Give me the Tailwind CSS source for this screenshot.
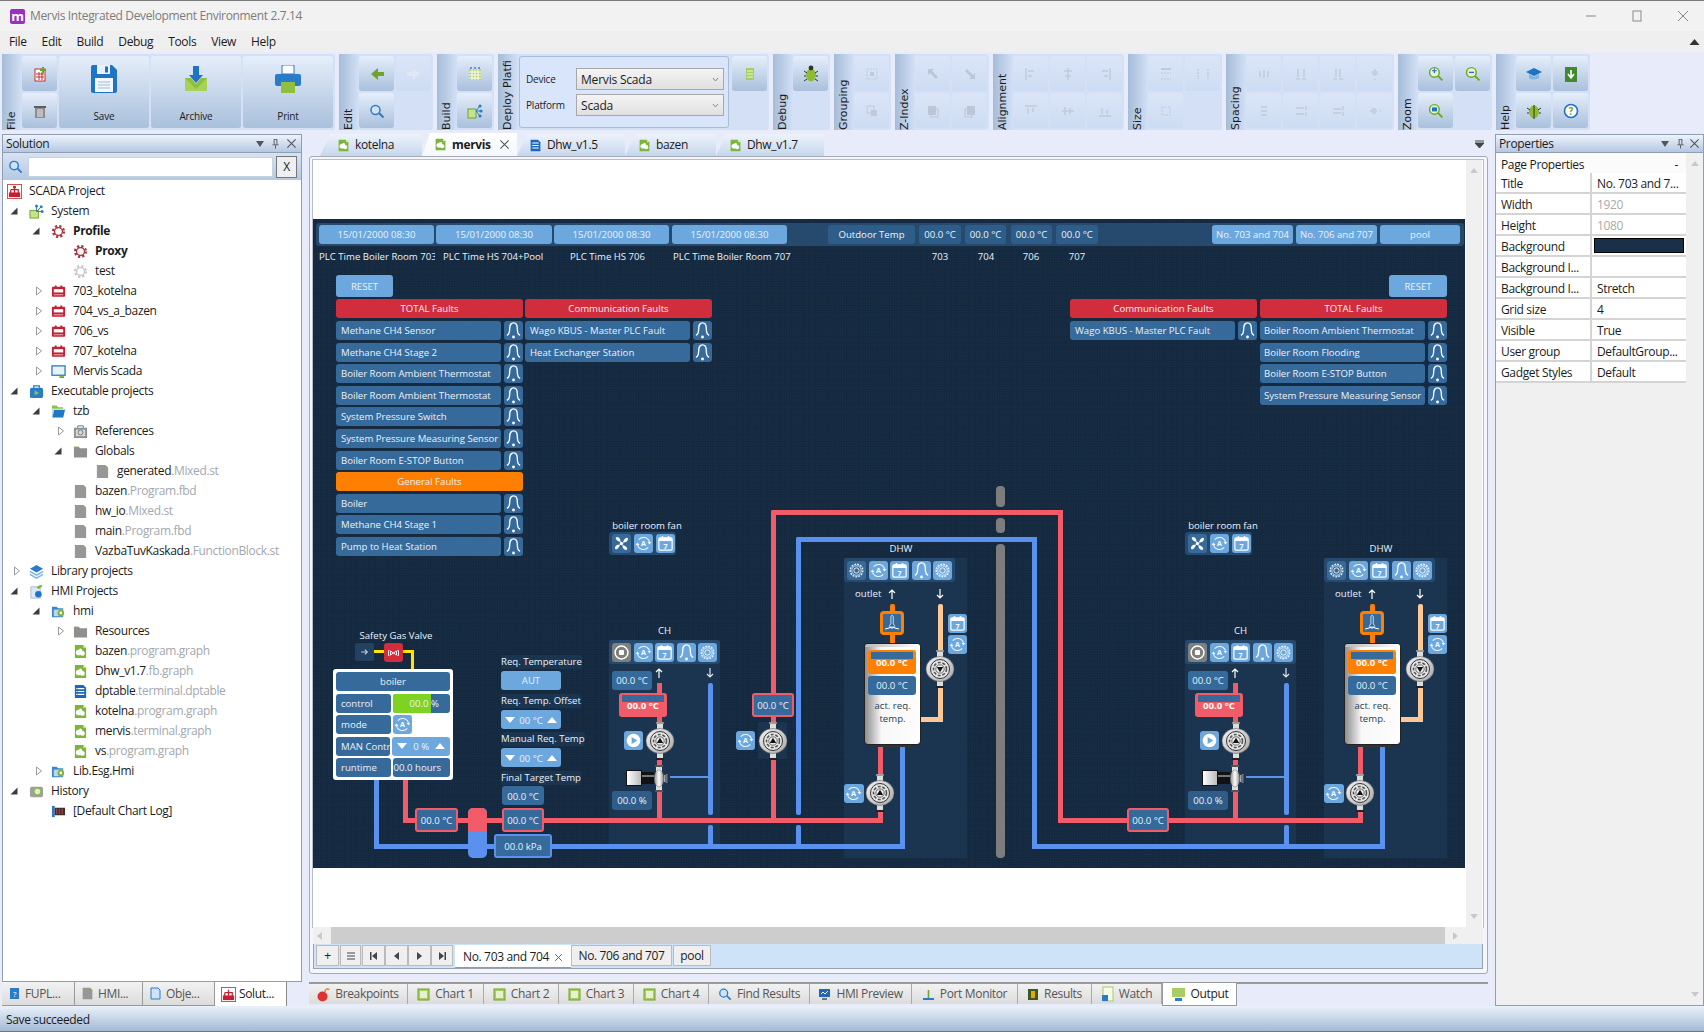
<!DOCTYPE html>
<html>
<head>
<meta charset="utf-8">
<title>Mervis IDE</title>
<script src="https://cdn.jsdelivr.net/npm/@tailwindcss/browser@4"></script>
</head>
<body class="m-0 overflow-hidden bg-[#e8ecfa]">
<svg class="absolute w-0 h-0" aria-hidden="true">
<defs>
<linearGradient id="pg" x1="0" y1="0" x2="1" y2="1"><stop offset="0" stop-color="#f4f4f4"/><stop offset="1" stop-color="#a8a8a8"/></linearGradient>
<linearGradient id="hg" x1="0" y1="0" x2="1" y2="0"><stop offset="0" stop-color="#8a8a8a"/><stop offset=".5" stop-color="#ffffff"/><stop offset="1" stop-color="#8a8a8a"/></linearGradient>
<symbol id="pump-up" viewBox="0 0 30 38">
<rect x="11" y="0" width="8" height="2" fill="#bbb" stroke="#444" stroke-width=".5"/><rect x="12" y="2" width="6" height="5" fill="#ddd"/>
<rect x="11" y="36" width="8" height="2" fill="#222"/><rect x="12" y="31" width="6" height="5" fill="#ddd"/>
<ellipse cx="15" cy="19" rx="14" ry="12.5" fill="url(#pg)" stroke="#666" stroke-width=".6"/>
<circle cx="15" cy="19" r="9.5" fill="#e6e6e6" stroke="#333" stroke-width="1"/><circle cx="15" cy="19" r="6.5" fill="none" stroke="#555" stroke-width="1.6" stroke-dasharray="3 1.6"/>
<circle cx="15" cy="19" r="4.2" fill="#eee" stroke="#333" stroke-width=".7"/><path d="M15 15.8 L18.2 21 H11.8 Z" fill="#111"/>
</symbol>
<symbol id="pump-down" viewBox="0 0 30 38">
<rect x="11" y="0" width="8" height="2" fill="#bbb" stroke="#444" stroke-width=".5"/><rect x="12" y="2" width="6" height="5" fill="#ddd"/>
<rect x="11" y="36" width="8" height="2" fill="#222"/><rect x="12" y="31" width="6" height="5" fill="#ddd"/>
<ellipse cx="15" cy="19" rx="14" ry="12.5" fill="url(#pg)" stroke="#666" stroke-width=".6"/>
<circle cx="15" cy="19" r="9.5" fill="#e6e6e6" stroke="#333" stroke-width="1"/><circle cx="15" cy="19" r="6.5" fill="none" stroke="#555" stroke-width="1.6" stroke-dasharray="3 1.6"/>
<circle cx="15" cy="19" r="4.2" fill="#eee" stroke="#333" stroke-width=".7"/><path d="M15 22.2 L18.2 17 H11.8 Z" fill="#111"/>
</symbol>
<symbol id="valve" viewBox="0 0 14 27">
<rect x="1" y="0" width="8" height="2" fill="#555"/><rect x="1" y="25" width="8" height="2" fill="#555"/>
<rect x="2" y="2" width="6" height="23" fill="#ddd"/><ellipse cx="5" cy="13.5" rx="4.8" ry="8.5" fill="url(#hg)" stroke="#555" stroke-width=".4"/>
<rect x="10" y="10" width="1.4" height="7" fill="#aaa"/><rect x="11.5" y="9" width="2" height="9" fill="#777"/>
</symbol>
<symbol id="i-auto" viewBox="0 0 20 20"><path d="M5 6 A6.5 6.5 0 0 1 16.3 8.5 M15 14 A6.5 6.5 0 0 1 3.7 11.5" fill="none" stroke="#fff" stroke-opacity=".9" stroke-width="1.1"/><path d="M14.2 8.5 H18.4 L16.3 11 Z M5.8 11.5 H1.6 L3.7 9 Z" fill="#fff" fill-opacity=".9"/><text x="10" y="13" font-size="7.5" font-weight="700" text-anchor="middle" fill="#fff" font-family="Open Sans">A</text></symbol>
<symbol id="i-cal" viewBox="0 0 20 20"><rect x="3" y="4" width="14" height="13" rx="1.5" fill="none" stroke="#fff" stroke-width="1.3"/><rect x="3" y="4" width="14" height="3.4" fill="#fff"/><rect x="6" y="2.2" width="1.6" height="3" fill="#fff"/><rect x="12.4" y="2.2" width="1.6" height="3" fill="#fff"/><text x="10" y="15.4" font-size="7.5" font-weight="700" text-anchor="middle" fill="#fff" font-family="Open Sans">7</text></symbol>
<symbol id="i-bell" viewBox="0 0 20 20"><path d="M3 15 C5.6 14.4 6 11 6 8 C6 4 8 2 10 2 C12 2 14 4 14 8 C14 11 14.4 14.4 17 15" fill="none" stroke="#fff" stroke-width="1.4"/><circle cx="10" cy="16.8" r="1.5" fill="#fff"/></symbol>
<symbol id="i-gear" viewBox="0 0 20 20"><circle cx="10" cy="10" r="6.6" fill="none" stroke="#fff" stroke-opacity=".85" stroke-width="1.6" stroke-dasharray="2 1.1"/><circle cx="10" cy="10" r="5" fill="none" stroke="#fff" stroke-opacity=".85" stroke-width=".9"/><circle cx="10" cy="10" r="2.8" fill="none" stroke="#fff" stroke-opacity=".9" stroke-width="1"/></symbol>
<symbol id="i-play" viewBox="0 0 20 20"><circle cx="10" cy="10" r="7.2" fill="#fff"/><path d="M8 6.4 L14 10 L8 13.6 Z" fill="#6ca8de"/></symbol>
<symbol id="i-rec" viewBox="0 0 20 20"><circle cx="10" cy="10" r="6.8" fill="none" stroke="#fff" stroke-width="1.6"/><rect x="7.4" y="7.4" width="5.2" height="5.2" rx="1" fill="#fff"/></symbol>
<symbol id="i-fan" viewBox="0 0 20 20"><circle cx="10" cy="10" r="1.8" fill="#fff"/><path d="M9 8.4 C7 8 3.4 6 4 4 C4.8 2.4 7.4 3.4 8.2 5 C8.8 6.2 9.2 7.2 9 8.4 Z M11.6 9 C12 7 14 3.4 16 4 C17.6 4.8 16.6 7.4 15 8.2 C13.8 8.8 12.8 9.2 11.6 9 Z M11 11.6 C13 12 16.6 14 16 16 C15.2 17.6 12.6 16.6 11.8 15 C11.2 13.8 10.8 12.8 11 11.6 Z M8.4 11 C8 13 6 16.6 4 16 C2.4 15.2 3.4 12.6 5 11.8 C6.2 11.2 7.2 10.8 8.4 11 Z" fill="#fff"/></symbol>
<symbol id="i-sensor" viewBox="0 0 20 20"><path d="M8.8 3 a1.3 1.3 0 0 1 2.6 0 V11 a2.6 2.6 0 1 1 -2.6 0 Z" fill="none" stroke="#d8e6f4" stroke-width="1"/><path d="M2.5 16.5 C6 16.5 8 14.5 10 14.5 C12 14.5 14 16.5 17.5 16.5" fill="none" stroke="#fff" stroke-width="1.2"/></symbol>
<symbol id="t-gear" viewBox="0 0 16 16"><circle cx="8" cy="8" r="5.7" fill="none" stroke="currentColor" stroke-width="2.6" stroke-dasharray="2.3 2.2"/><circle cx="8" cy="8" r="4.2" fill="none" stroke="currentColor" stroke-width="1.4"/></symbol>
<symbol id="t-plc" viewBox="0 0 16 16"><rect x="1" y="3" width="14" height="10.5" rx="1" fill="#c42033"/><rect x="3" y="5.5" width="10" height="3.5" fill="#fff"/><rect x="3" y="11" width="10" height="1" fill="#f4b8be"/><rect x="4" y="1.6" width="2" height="2" fill="#c42033"/><rect x="10" y="1.6" width="2" height="2" fill="#c42033"/></symbol>
<symbol id="t-file" viewBox="0 0 16 16"><path d="M2 1 H11 L14 4 V15 H2 Z" fill="#979797"/><path d="M11 1 L14 4 H11 Z" fill="#7cb342"/></symbol>
<symbol id="t-graph" viewBox="0 0 16 16"><path d="M2 1 H11 L14 4 V15 H2 Z" fill="#7db53c"/><path d="M11 1 L14 4 H11 Z" fill="#d7ecb5"/><circle cx="6" cy="9" r="3" fill="#fff"/><circle cx="10" cy="10" r="2.6" fill="#fff"/><circle cx="8" cy="6.6" r="1.8" fill="#fff"/></symbol>
<symbol id="t-folder" viewBox="0 0 16 16"><path d="M1 3 H6 L7.5 4.5 H15 V14.5 H1 Z" fill="#8f8f8f"/><path d="M1 3 H6 L7 4 H1 Z" fill="#7cb342"/></symbol>
<symbol id="t-fopen" viewBox="0 0 16 16"><path d="M1 1.5 H6 L7.5 3.5 H13 V5 H1 Z" fill="#8dc04c"/><path d="M1 5 H3 V14.5 H1 Z" fill="#bcd7f0"/><path d="M3.4 6 H15 L13 14.5 H1.6 Z" fill="#1e78c8"/></symbol>
<symbol id="t-hmif" viewBox="0 0 16 16"><path d="M1 3 H6 L7.5 4.5 H13 V14 H1 Z" fill="#3d88c9"/><path d="M3 6 H13 V13 H3 Z" fill="#bcd7f0"/><circle cx="10.5" cy="9.5" r="3.5" fill="#7db53c"/><circle cx="10.5" cy="9.5" r="1.5" fill="#fff"/></symbol>
<symbol id="t-table" viewBox="0 0 16 16"><path d="M2 1 H11 L14 4 V15 H2 Z" fill="#1f67b8"/><path d="M5 5 H12 M5 8 H12 M5 11 H12 M3.5 5 H4.5 M3.5 8 H4.5 M3.5 11 H4.5" stroke="#fff" stroke-width="1.3"/></symbol>
<symbol id="i-cross" viewBox="0 0 12 12"><path d="M1.5 1.5 L10.5 10.5 M10.5 1.5 L1.5 10.5" stroke="#555" stroke-width="1.2"/></symbol>
<symbol id="i-pin" viewBox="0 0 12 12"><path d="M4 1 H8 V7 H9.5 V8 H6.5 V11.5 H5.5 V8 H2.5 V7 H4 Z M5 2 V7 H7 V2 Z" fill="#555"/></symbol>
<symbol id="a-open" viewBox="0 0 8 10"><path d="M1.5 1 L6.5 5 L1.5 9 Z" fill="#fff" stroke="#9a9a9a"/></symbol>
<symbol id="a-fill" viewBox="0 0 8 8"><path d="M7.5 .5 V7.5 H.5 Z" fill="#3c3c3c"/></symbol>
<symbol id="z-zoom" viewBox="0 0 20 20"><circle cx="8" cy="8" r="6" fill="#e8f5d8" stroke="#69a821" stroke-width="1.8"/><path d="M12.4 12.4 L18 18" stroke="#69a821" stroke-width="2.4"/></symbol>
</defs>
</svg>

<div class="flex h-[1032px] w-[1704px] flex-col overflow-hidden border-t border-[#7a7a7a] font-['Open_Sans',sans-serif] text-[12px] tracking-[-0.35px] text-[#1c1c1c]">

<!-- title bar -->
<div class="flex h-[30px] items-center bg-[#f2f2f2] pl-[10px] pr-[15px]">
  <div class="mr-[5px] flex h-[15px] w-[15px] items-center justify-center rounded-[2px] bg-[#9a2fc2] text-[13px] font-bold leading-none text-white">m</div>
  <span class="text-[#7c7c7c]">Mervis Integrated Development Environment 2.7.14</span>
  <div class="ml-auto flex items-center gap-[34px]">
    <svg class="h-[12px] w-[12px]" viewBox="0 0 12 12"><path d="M1 6 H11" stroke="#888" stroke-width="1"/></svg>
    <svg class="h-[12px] w-[12px]" viewBox="0 0 12 12"><rect x="2" y="1" width="8" height="10" fill="none" stroke="#888"/></svg>
    <svg class="h-[12px] w-[12px]" viewBox="0 0 12 12"><path d="M1 1 L11 11 M11 1 L1 11" stroke="#888"/></svg>
  </div>
</div>

<!-- menu -->
<div class="flex h-[21px] items-center gap-[15px] bg-[#efefef] pl-[9px]">
  <span>File</span><span>Edit</span><span>Build</span><span>Debug</span><span>Tools</span><span>View</span><span>Help</span>
  <svg class="ml-auto mr-[4px] h-[8px] w-[11px]" viewBox="0 0 11 8"><path d="M5.5 1 L10.5 7 H.5 Z" fill="#333"/></svg>
</div>

<!-- toolbar -->
<div class="flex h-[81px] gap-[4px] bg-[#e8ecfa] pl-[2px] pt-[2px] font-['DejaVu_Sans',sans-serif] tracking-normal">
  <!-- File -->
  <div class="flex h-[76px] w-[333px] rounded-[3px] bg-[#d3e0f6]">
    <div class="flex w-[20px] items-center justify-start rounded-l-[3px] bg-gradient-to-l from-[#a5bcd8] to-[#d3e0f6] py-[4px] [writing-mode:vertical-rl] rotate-180 text-[11px] leading-[20px]">File</div>
    <div class="grid grid-rows-2 gap-[2px] py-[2px]">
      <div class="flex h-[35px] w-[35px] items-center justify-center rounded-[3px] bg-gradient-to-b from-[#e6eefa] to-[#a9c0dc]"><svg class="h-[16px] w-[16px]" viewBox="0 0 16 16"><rect x="3" y="3" width="10" height="12" fill="#fff" stroke="#c62e2e"/><path d="M4 8 H12 M4 11 H12 M7 6 V14 M10 6 V14" stroke="#c62e2e"/><path d="M10 1 H12 V3 H14 V5 H12 V7 H10 V5 H8 V3 H10 Z" fill="#63a62b"/></svg></div>
      <div class="flex h-[35px] w-[35px] items-center justify-center rounded-[3px] bg-gradient-to-b from-[#e6eefa] to-[#a9c0dc]"><svg class="h-[16px] w-[16px]" viewBox="0 0 16 16"><rect x="3" y="5" width="10" height="10" fill="#8d8d8d"/><rect x="2" y="3" width="12" height="2" fill="#5f5f5f"/><path d="M6 6 V14 M8 6 V14 M10 6 V14" stroke="#eee"/></svg></div>
    </div>
    <div class="ml-[2px] mt-[2px] flex h-[72px] w-[90px] flex-col items-center rounded-[3px] bg-gradient-to-b from-[#e6eefa] to-[#a9c0dc] pt-[9px] font-['Open_Sans',sans-serif] text-[10px] tracking-[-0.2px]">
      <svg class="h-[28px] w-[26px]" viewBox="0 0 26 28"><path d="M2 0 H21 L26 5 V26 Q26 28 24 28 H2 Q0 28 0 26 V2 Q0 0 2 0 Z" fill="#1f73c4"/><rect x="6" y="0" width="13" height="9" fill="#e8f1fa"/><rect x="14" y="1.5" width="3" height="6" fill="#1f73c4"/><rect x="4" y="13" width="18" height="14" fill="#f3f7fb"/><path d="M7 17 H19 M7 20 H19 M7 23 H19" stroke="#9bb9d6"/></svg>
      <span class="mt-auto mb-[4px]">Save</span>
    </div>
    <div class="ml-[2px] mt-[2px] flex h-[72px] w-[90px] flex-col items-center rounded-[3px] bg-gradient-to-b from-[#e6eefa] to-[#a9c0dc] pt-[9px] font-['Open_Sans',sans-serif] text-[10px] tracking-[-0.2px]">
      <svg class="h-[28px] w-[26px]" viewBox="0 0 26 28"><path d="M2 13 L8 13 L13 19 L18 13 L24 13 V26 H2 Z" fill="#8fbf3f"/><path d="M2 13 L13 24 L24 13 V26 H2 Z" fill="#a8d158"/><path d="M10 1 H16 V10 H20 L13 18 L6 10 H10 Z" fill="#1f73c4"/></svg>
      <span class="mt-auto mb-[4px]">Archive</span>
    </div>
    <div class="ml-[2px] mt-[2px] flex h-[72px] w-[90px] flex-col items-center rounded-[3px] bg-gradient-to-b from-[#e6eefa] to-[#a9c0dc] pt-[9px] font-['Open_Sans',sans-serif] text-[10px] tracking-[-0.2px]">
      <svg class="h-[28px] w-[28px]" viewBox="0 0 28 28"><rect x="8" y="0" width="12" height="9" fill="#fff" stroke="#2a7cc8"/><rect x="1" y="9" width="26" height="12" rx="2" fill="#2a7cc8"/><rect x="7" y="17" width="14" height="11" fill="#8fbf3f"/></svg>
      <span class="mt-auto mb-[4px]">Print</span>
    </div>
  </div>
  <!-- Edit -->
  <div class="flex h-[76px] w-[94px] rounded-[3px] bg-[#d3e0f6]">
    <div class="flex w-[20px] items-center justify-start rounded-l-[3px] bg-gradient-to-l from-[#a5bcd8] to-[#d3e0f6] py-[4px] [writing-mode:vertical-rl] rotate-180 text-[11px] leading-[20px]">Edit</div>
    <div class="grid grid-flow-col grid-rows-2 gap-[2px] py-[2px]">
      <div class="flex h-[35px] w-[35px] items-center justify-center rounded-[3px] bg-gradient-to-b from-[#e6eefa] to-[#a9c0dc]"><svg class="h-[16px] w-[16px]" viewBox="0 0 16 16"><path d="M9 2 V6 H15 V10 H9 V14 L2 8 Z" fill="#6fa32c"/></svg></div>
      <div class="flex h-[35px] w-[35px] items-center justify-center rounded-[3px] bg-gradient-to-b from-[#e6eefa] to-[#a9c0dc]"><svg class="h-[16px] w-[16px]" viewBox="0 0 16 16"><circle cx="6.5" cy="7" r="4.5" fill="#cfe3f5" stroke="#2a7cc8" stroke-width="1.5"/><path d="M10 10 L14.5 14.5" stroke="#2a7cc8" stroke-width="2"/></svg></div>
      <div class="flex h-[35px] w-[35px] items-center justify-center rounded-[3px] bg-gradient-to-b from-[#dbe5f7] to-[#cddcf3]"><svg class="h-[16px] w-[16px]" viewBox="0 0 16 16"><path d="M7 2 V6 H1 V10 H7 V14 L14 8 Z" fill="#e2e8f3"/></svg></div>
    </div>
  </div>
  <!-- Build -->
  <div class="flex h-[76px] w-[57px] rounded-[3px] bg-[#d3e0f6]">
    <div class="flex w-[20px] items-center justify-start rounded-l-[3px] bg-gradient-to-l from-[#a5bcd8] to-[#d3e0f6] py-[4px] [writing-mode:vertical-rl] rotate-180 text-[11px] leading-[20px]">Build</div>
    <div class="grid grid-rows-2 gap-[2px] py-[2px]">
      <div class="flex h-[35px] w-[35px] items-center justify-center rounded-[3px] bg-gradient-to-b from-[#e6eefa] to-[#a9c0dc]"><svg class="h-[16px] w-[16px]" viewBox="0 0 16 16"><rect x="2" y="3" width="12" height="11" fill="#b4d36e"/><path d="M2 6 H14 M2 9 H14 M2 12 H14 M5 3 V14 M8 3 V14 M11 3 V14" stroke="#fff"/><path d="M4 1 V3 M8 1 V3 M12 1 V3" stroke="#2a7cc8" stroke-width="1.4"/></svg></div>
      <div class="flex h-[35px] w-[35px] items-center justify-center rounded-[3px] bg-gradient-to-b from-[#e6eefa] to-[#a9c0dc]"><svg class="h-[16px] w-[16px]" viewBox="0 0 16 16"><rect x="1" y="6" width="8" height="9" fill="#c9e08d" stroke="#6fa32c"/><circle cx="13" cy="3" r="1.6" fill="#2a7cc8"/><circle cx="14" cy="8" r="1.6" fill="#2a7cc8"/><circle cx="13" cy="13" r="1.6" fill="#2a7cc8"/><path d="M9 8 L13 3 M9 8 H14 M9 8 L13 13" stroke="#2a7cc8"/></svg></div>
    </div>
  </div>
  <!-- Deploy -->
  <div class="flex h-[76px] w-[271px] rounded-[3px] bg-[#d3e0f6]">
    <div class="flex w-[20px] items-center justify-start overflow-hidden rounded-l-[3px] bg-gradient-to-l from-[#a5bcd8] to-[#d3e0f6] py-[4px] [writing-mode:vertical-rl] rotate-180 whitespace-nowrap text-[11px] leading-[20px]">Deploy Platfi</div>
    <div class="my-[2px] ml-[1px] flex h-[72px] w-[210px] flex-col justify-center gap-[4px] rounded-[3px] border border-[#a9bdd6] bg-[#d8e5fa] pl-[6px] font-['Open_Sans',sans-serif] text-[10px] tracking-[-0.2px]">
      <div class="flex h-[22px] items-center"><span class="w-[50px]">Device</span><div class="flex h-[22px] w-[148px] items-center justify-between border border-[#a8a8a8] bg-gradient-to-b from-[#f4f4f4] to-[#e0e0e0] px-[4px] pt-[1px] text-[12px]">Mervis Scada<svg class="h-[5px] w-[7px]" viewBox="0 0 7 5"><path d="M1 1 L3.5 4 L6 1" fill="none" stroke="#888"/></svg></div></div>
      <div class="flex h-[22px] items-center"><span class="w-[50px]">Platform</span><div class="flex h-[22px] w-[148px] items-center justify-between border border-[#a8a8a8] bg-gradient-to-b from-[#f4f4f4] to-[#e0e0e0] px-[4px] pt-[1px] text-[12px]">Scada<svg class="h-[5px] w-[7px]" viewBox="0 0 7 5"><path d="M1 1 L3.5 4 L6 1" fill="none" stroke="#888"/></svg></div></div>
    </div>
    <div class="ml-[3px] mt-[2px] flex h-[35px] w-[35px] items-center justify-center rounded-[3px] bg-gradient-to-b from-[#e6eefa] to-[#a9c0dc]"><svg class="h-[16px] w-[16px]" viewBox="0 0 16 16"><rect x="4" y="2" width="8" height="12" fill="#a8cd63"/><path d="M5 5 H11 M5 8 H11 M5 11 H11" stroke="#eef6dd"/></svg></div>
  </div>
  <!-- Debug -->
  <div class="flex h-[76px] w-[57px] rounded-[3px] bg-[#d3e0f6]">
    <div class="flex w-[20px] items-center justify-start rounded-l-[3px] bg-gradient-to-l from-[#a5bcd8] to-[#d3e0f6] py-[4px] [writing-mode:vertical-rl] rotate-180 text-[11px] leading-[20px]">Debug</div>
    <div class="mt-[2px] flex h-[35px] w-[35px] items-center justify-center rounded-[3px] bg-gradient-to-b from-[#e6eefa] to-[#a9c0dc]"><svg class="h-[18px] w-[16px]" viewBox="0 0 16 18"><ellipse cx="8" cy="10" rx="5" ry="6.5" fill="#8dbb32"/><circle cx="8" cy="3" r="2.4" fill="#333"/><path d="M1 6 L4 8 M15 6 L12 8 M1 11 H3 M15 11 H13 M1 16 L4 14 M15 16 L12 14" stroke="#333"/></svg></div>
  </div>
  <!-- Grouping -->
  <div class="flex h-[76px] w-[57px] rounded-[3px] bg-[#d3e0f6]">
    <div class="flex w-[20px] items-center justify-start rounded-l-[3px] bg-gradient-to-l from-[#a5bcd8] to-[#d3e0f6] py-[4px] [writing-mode:vertical-rl] rotate-180 text-[11px] leading-[20px]">Grouping</div>
    <div class="grid grid-rows-2 gap-[2px] py-[2px]">
      <div class="flex h-[35px] w-[35px] items-center justify-center rounded-[3px] bg-gradient-to-b from-[#dbe5f7] to-[#cddcf3] text-[#c0cad9]"><svg class="h-[14px] w-[14px]" viewBox="0 0 14 14"><rect x="2" y="2" width="10" height="10" fill="none" stroke="currentColor" stroke-dasharray="2 1"/><rect x="5" y="5" width="4" height="4" fill="currentColor"/></svg></div>
      <div class="flex h-[35px] w-[35px] items-center justify-center rounded-[3px] bg-gradient-to-b from-[#dbe5f7] to-[#cddcf3] text-[#c0cad9]"><svg class="h-[14px] w-[14px]" viewBox="0 0 14 14"><rect x="2" y="2" width="7" height="7" fill="none" stroke="currentColor"/><rect x="6" y="6" width="6" height="6" fill="currentColor"/></svg></div>
    </div>
  </div>
  <!-- Z-Index -->
  <div class="flex h-[76px] w-[94px] rounded-[3px] bg-[#d3e0f6]">
    <div class="flex w-[20px] items-center justify-start rounded-l-[3px] bg-gradient-to-l from-[#a5bcd8] to-[#d3e0f6] py-[4px] [writing-mode:vertical-rl] rotate-180 text-[11px] leading-[20px]">Z-Index</div>
    <div class="grid grid-cols-[35px_35px] grid-rows-2 gap-[2px] py-[2px] text-[#bcc6d6]">
      <div class="flex h-[35px] items-center justify-center rounded-[3px] bg-gradient-to-b from-[#dbe5f7] to-[#cddcf3]"><svg class="h-[14px] w-[14px]" viewBox="0 0 14 14"><path d="M2 2 H8 L6 4 L12 10 L10 12 L4 6 L2 8 Z" fill="currentColor"/></svg></div>
      <div class="flex h-[35px] items-center justify-center rounded-[3px] bg-gradient-to-b from-[#dbe5f7] to-[#cddcf3]"><svg class="h-[14px] w-[14px]" viewBox="0 0 14 14"><path d="M2 2 H8 L6 4 L12 10 L10 12 L4 6 L2 8 Z" fill="currentColor" transform="rotate(180 7 7)"/></svg></div>
      <div class="flex h-[35px] items-center justify-center rounded-[3px] bg-gradient-to-b from-[#dbe5f7] to-[#cddcf3]"><svg class="h-[14px] w-[14px]" viewBox="0 0 14 14"><rect x="2" y="2" width="8" height="9" fill="currentColor"/><rect x="5" y="5" width="7" height="8" fill="none" stroke="currentColor"/></svg></div>
      <div class="flex h-[35px] items-center justify-center rounded-[3px] bg-gradient-to-b from-[#dbe5f7] to-[#cddcf3]"><svg class="h-[14px] w-[14px]" viewBox="0 0 14 14"><rect x="4" y="2" width="8" height="9" fill="currentColor"/><rect x="2" y="5" width="7" height="8" fill="none" stroke="currentColor"/></svg></div>
    </div>
  </div>
  <!-- Alignment -->
  <div class="flex h-[76px] w-[131px] rounded-[3px] bg-[#d3e0f6]">
    <div class="flex w-[20px] items-center justify-start rounded-l-[3px] bg-gradient-to-l from-[#a5bcd8] to-[#d3e0f6] py-[4px] [writing-mode:vertical-rl] rotate-180 text-[11px] leading-[20px]">Alignment</div>
    <div class="grid grid-cols-[35px_35px_35px] grid-rows-2 gap-[2px] py-[2px] text-[#c0cad9]">
      <div class="flex h-[35px] items-center justify-center rounded-[3px] bg-gradient-to-b from-[#dbe5f7] to-[#cddcf3]"><svg class="h-[14px] w-[14px]" viewBox="0 0 14 14"><path d="M2 1 V13 M4 4 H10 M4 9 H8" stroke="currentColor" stroke-width="1.5"/></svg></div>
      <div class="flex h-[35px] items-center justify-center rounded-[3px] bg-gradient-to-b from-[#dbe5f7] to-[#cddcf3]"><svg class="h-[14px] w-[14px]" viewBox="0 0 14 14"><path d="M7 1 V13 M3 4 H11 M4 9 H10" stroke="currentColor" stroke-width="1.5"/></svg></div>
      <div class="flex h-[35px] items-center justify-center rounded-[3px] bg-gradient-to-b from-[#dbe5f7] to-[#cddcf3]"><svg class="h-[14px] w-[14px]" viewBox="0 0 14 14"><path d="M12 1 V13 M4 4 H10 M6 9 H10" stroke="currentColor" stroke-width="1.5"/></svg></div>
      <div class="flex h-[35px] items-center justify-center rounded-[3px] bg-gradient-to-b from-[#dbe5f7] to-[#cddcf3]"><svg class="h-[14px] w-[14px]" viewBox="0 0 14 14"><path d="M1 2 H13 M4 4 V10 M9 4 V8" stroke="currentColor" stroke-width="1.5"/></svg></div>
      <div class="flex h-[35px] items-center justify-center rounded-[3px] bg-gradient-to-b from-[#dbe5f7] to-[#cddcf3]"><svg class="h-[14px] w-[14px]" viewBox="0 0 14 14"><path d="M1 7 H13 M4 3 V11 M9 4 V10" stroke="currentColor" stroke-width="1.5"/></svg></div>
      <div class="flex h-[35px] items-center justify-center rounded-[3px] bg-gradient-to-b from-[#dbe5f7] to-[#cddcf3]"><svg class="h-[14px] w-[14px]" viewBox="0 0 14 14"><path d="M1 12 H13 M4 4 V10 M9 6 V10" stroke="currentColor" stroke-width="1.5"/></svg></div>
    </div>
  </div>
  <!-- Size -->
  <div class="flex h-[76px] w-[94px] rounded-[3px] bg-[#d3e0f6]">
    <div class="flex w-[20px] items-center justify-start rounded-l-[3px] bg-gradient-to-l from-[#a5bcd8] to-[#d3e0f6] py-[4px] [writing-mode:vertical-rl] rotate-180 text-[11px] leading-[20px]">Size</div>
    <div class="grid grid-cols-[35px_35px] grid-rows-2 gap-[2px] py-[2px] text-[#c0cad9]">
      <div class="flex h-[35px] items-center justify-center rounded-[3px] bg-gradient-to-b from-[#dbe5f7] to-[#cddcf3]"><svg class="h-[14px] w-[14px]" viewBox="0 0 14 14"><path d="M2 2 H12" stroke="currentColor" stroke-width="2"/><path d="M2 6 H12 M2 12 H12" stroke="currentColor" stroke-dasharray="2 1"/></svg></div>
      <div class="flex h-[35px] items-center justify-center rounded-[3px] bg-gradient-to-b from-[#dbe5f7] to-[#cddcf3]"><svg class="h-[14px] w-[14px]" viewBox="0 0 14 14"><path d="M2 2 V12 M12 2 V12" stroke="currentColor" stroke-width="1.4" stroke-dasharray="2 1"/></svg></div>
      <div class="flex h-[35px] items-center justify-center rounded-[3px] bg-gradient-to-b from-[#dbe5f7] to-[#cddcf3]"><svg class="h-[14px] w-[14px]" viewBox="0 0 14 14"><rect x="3" y="3" width="8" height="8" fill="none" stroke="currentColor" stroke-dasharray="2 1"/></svg></div>
    </div>
  </div>
  <!-- Spacing -->
  <div class="flex h-[76px] w-[168px] rounded-[3px] bg-[#d3e0f6]">
    <div class="flex w-[20px] items-center justify-start rounded-l-[3px] bg-gradient-to-l from-[#a5bcd8] to-[#d3e0f6] py-[4px] [writing-mode:vertical-rl] rotate-180 text-[11px] leading-[20px]">Spacing</div>
    <div class="grid grid-cols-[35px_35px_35px_35px] grid-rows-2 gap-[2px] py-[2px] text-[#c0cad9]">
      <div class="flex h-[35px] items-center justify-center rounded-[3px] bg-gradient-to-b from-[#dbe5f7] to-[#cddcf3]"><svg class="h-[14px] w-[14px]" viewBox="0 0 14 14"><path d="M3 4 V10 M7 3 V11 M11 4 V10" stroke="currentColor" stroke-width="1.5"/></svg></div>
      <div class="flex h-[35px] items-center justify-center rounded-[3px] bg-gradient-to-b from-[#dbe5f7] to-[#cddcf3]"><svg class="h-[14px] w-[14px]" viewBox="0 0 14 14"><path d="M4 2 V10 M10 2 V10 M2 12 H6 M8 12 H12" stroke="currentColor" stroke-width="1.5"/></svg></div>
      <div class="flex h-[35px] items-center justify-center rounded-[3px] bg-gradient-to-b from-[#dbe5f7] to-[#cddcf3]"><svg class="h-[14px] w-[14px]" viewBox="0 0 14 14"><path d="M5 2 V10 M9 2 V10 M2 12 H6 M8 12 H12" stroke="currentColor" stroke-width="1.5"/></svg></div>
      <div class="flex h-[35px] items-center justify-center rounded-[3px] bg-gradient-to-b from-[#dbe5f7] to-[#cddcf3]"><svg class="h-[14px] w-[14px]" viewBox="0 0 14 14"><path d="M7 2 V9 M5 4 V8 M9 4 V8 M7 12 V13" stroke="currentColor" stroke-width="1.5"/></svg></div>
      <div class="flex h-[35px] items-center justify-center rounded-[3px] bg-gradient-to-b from-[#dbe5f7] to-[#cddcf3]"><svg class="h-[14px] w-[14px]" viewBox="0 0 14 14"><path d="M4 3 H10 M4 7 H10 M4 11 H10" stroke="currentColor" stroke-width="1.5"/></svg></div>
      <div class="flex h-[35px] items-center justify-center rounded-[3px] bg-gradient-to-b from-[#dbe5f7] to-[#cddcf3]"><svg class="h-[14px] w-[14px]" viewBox="0 0 14 14"><path d="M2 4 H10 M2 10 H10 M12 2 V6 M12 8 V12" stroke="currentColor" stroke-width="1.5"/></svg></div>
      <div class="flex h-[35px] items-center justify-center rounded-[3px] bg-gradient-to-b from-[#dbe5f7] to-[#cddcf3]"><svg class="h-[14px] w-[14px]" viewBox="0 0 14 14"><path d="M2 5 H10 M2 9 H10 M12 2 V6 M12 8 V12" stroke="currentColor" stroke-width="1.5"/></svg></div>
      <div class="flex h-[35px] items-center justify-center rounded-[3px] bg-gradient-to-b from-[#dbe5f7] to-[#cddcf3]"><svg class="h-[14px] w-[14px]" viewBox="0 0 14 14"><path d="M2 7 H9 M4 5 H8 M4 9 H8 M12 7 H13" stroke="currentColor" stroke-width="1.5"/></svg></div>
    </div>
  </div>
  <!-- Zoom -->
  <div class="flex h-[76px] w-[94px] rounded-[3px] bg-[#d3e0f6]">
    <div class="flex w-[20px] items-center justify-start rounded-l-[3px] bg-gradient-to-l from-[#a5bcd8] to-[#d3e0f6] py-[4px] [writing-mode:vertical-rl] rotate-180 text-[11px] leading-[20px]">Zoom</div>
    <div class="grid grid-cols-[35px_35px] grid-rows-2 gap-[2px] py-[2px]">
      <div class="flex h-[35px] items-center justify-center rounded-[3px] bg-gradient-to-b from-[#e6eefa] to-[#a9c0dc]"><svg class="h-[16px] w-[16px]"><use href="#z-zoom"/><path d="M5 6 H11 M8 3 V9" stroke="#1f73c4" stroke-width="1.4" transform="scale(.8)"/></svg></div>
      <div class="flex h-[35px] items-center justify-center rounded-[3px] bg-gradient-to-b from-[#e6eefa] to-[#a9c0dc]"><svg class="h-[16px] w-[16px]"><use href="#z-zoom"/><path d="M4 6.4 H9" stroke="#1f73c4" stroke-width="1.4"/></svg></div>
      <div class="flex h-[35px] items-center justify-center rounded-[3px] bg-gradient-to-b from-[#e6eefa] to-[#a9c0dc]"><svg class="h-[16px] w-[16px]"><use href="#z-zoom"/><rect x="4" y="4.4" width="5" height="4" fill="#1f73c4"/></svg></div>
    </div>
  </div>
  <!-- Help -->
  <div class="flex h-[76px] w-[94px] rounded-[3px] bg-[#d3e0f6]">
    <div class="flex w-[20px] items-center justify-start rounded-l-[3px] bg-gradient-to-l from-[#a5bcd8] to-[#d3e0f6] py-[4px] [writing-mode:vertical-rl] rotate-180 text-[11px] leading-[20px]">Help</div>
    <div class="grid grid-cols-[35px_35px] grid-rows-2 gap-[2px] py-[2px]">
      <div class="flex h-[35px] items-center justify-center rounded-[3px] bg-gradient-to-b from-[#e6eefa] to-[#a9c0dc]"><svg class="h-[16px] w-[18px]" viewBox="0 0 18 16"><path d="M1 6 L9 2 L17 6 L9 10 Z" fill="#1f73c4"/><path d="M4 8 V12 Q9 15 14 12 V8 L9 11 Z" fill="#7fb5e4"/></svg></div>
      <div class="flex h-[35px] items-center justify-center rounded-[3px] bg-gradient-to-b from-[#e6eefa] to-[#a9c0dc]"><svg class="h-[18px] w-[16px]" viewBox="0 0 16 18"><rect x="2" y="2" width="12" height="15" fill="#3f8a2c"/><path d="M8 5 V12 M5 9 L8 13 L11 9" fill="none" stroke="#fff" stroke-width="1.6"/></svg></div>
      <div class="flex h-[35px] items-center justify-center rounded-[3px] bg-gradient-to-b from-[#e6eefa] to-[#a9c0dc]"><svg class="h-[18px] w-[16px]" viewBox="0 0 16 18"><ellipse cx="8" cy="10" rx="5" ry="6.5" fill="#8dbb32"/><path d="M8 3 V17 M1 6 L4 8 M15 6 L12 8 M1 11 H3 M15 11 H13" stroke="#333"/></svg></div>
      <div class="flex h-[35px] items-center justify-center rounded-[3px] bg-gradient-to-b from-[#e6eefa] to-[#a9c0dc]"><svg class="h-[16px] w-[16px]" viewBox="0 0 16 16"><circle cx="8" cy="8" r="6.5" fill="#fff" stroke="#1f73c4" stroke-width="1.6"/><text x="8" y="11.5" font-size="10" font-weight="700" text-anchor="middle" fill="#6fa32c" font-family="Open Sans">?</text></svg></div>
    </div>
  </div>
</div>

<!-- middle -->
<div class="flex h-[873px] bg-[#e8ecfa]">
  <!-- solution -->
  <div class="ml-[2px] flex w-[300px] flex-col pt-[1px]">
    <div class="flex h-[19px] items-center border border-[#8f9eb2] bg-gradient-to-b from-[#eef3fb] to-[#b4c8e2] pl-[3px] pr-[4px]">
      <span>Solution</span>
      <svg class="ml-auto h-[6px] w-[8px]" viewBox="0 0 8 6"><path d="M0 0 H8 L4 6 Z" fill="#555"/></svg>
      <svg class="ml-[6px] h-[11px] w-[11px]"><use href="#i-pin"/></svg>
      <svg class="ml-[5px] h-[11px] w-[11px]"><use href="#i-cross"/></svg>
    </div>
    <div class="flex h-[27px] items-center border-x border-[#8f9eb2] bg-gradient-to-b from-[#d7e3f3] to-[#b4c8e2] pl-[5px] pr-[4px]">
      <svg class="mr-[5px] h-[15px] w-[15px]" viewBox="0 0 16 16"><circle cx="6.5" cy="7" r="4.5" fill="#cfe3f5" stroke="#2a7cc8" stroke-width="1.5"/><path d="M10 10 L14.5 14.5" stroke="#2a7cc8" stroke-width="2"/></svg>
      <div class="h-[20px] w-[245px] border border-[#c5d3e3] bg-white"></div>
      <div class="ml-[3px] flex h-[22px] w-[21px] items-center justify-center border border-[#777] bg-[#efefef] text-[12px]">X</div>
    </div>
    <div class="flex flex-1 flex-col border-x border-b border-[#8f9eb2] bg-white pt-[1px]">
      <div class="flex h-[20px] items-center pl-[4px]"><svg class="mr-[7px] h-[15px] w-[15px]" viewBox="0 0 16 16"><rect x=".5" y=".5" width="15" height="15" fill="#fff" stroke="#c94a4a"/><rect x="2" y="9" width="12" height="5" fill="#c42033"/><path d="M8 3 V10 M4 6 H12 V10 M4 6 V10" stroke="#c42033" stroke-width="1.3" fill="none"/><rect x="6.5" y="2" width="3" height="2.5" fill="#c42033"/></svg>SCADA Project</div>
      <div class="flex h-[20px] items-center pl-[4px]"><span class="flex w-[22px] pl-[3px]"><svg class="h-[8px] w-[8px]"><use href="#a-fill"/></svg></span><svg class="mr-[7px] h-[15px] w-[15px]" viewBox="0 0 16 16"><rect x="1" y="7" width="9" height="8" fill="#c9e08d" stroke="#6fa32c"/><circle cx="13" cy="3" r="1.6" fill="#2a7cc8"/><circle cx="14" cy="8" r="1.6" fill="#2a7cc8"/><circle cx="8" cy="2" r="1.6" fill="#2a7cc8"/><path d="M8 8 L13 3 M8 8 L14 8 M8 8 V2" stroke="#2a7cc8"/></svg>System</div>
      <div class="flex h-[20px] items-center pl-[26px]"><span class="flex w-[22px] pl-[3px]"><svg class="h-[8px] w-[8px]"><use href="#a-fill"/></svg></span><svg class="mr-[7px] h-[15px] w-[15px] text-[#a8303c]"><use href="#t-gear"/></svg><b class="font-bold">Profile</b></div>
      <div class="flex h-[20px] items-center pl-[70px]"><svg class="mr-[7px] h-[15px] w-[15px] text-[#a8303c]"><use href="#t-gear"/></svg><b class="font-bold">Proxy</b></div>
      <div class="flex h-[20px] items-center pl-[70px]"><svg class="mr-[7px] h-[15px] w-[15px] text-[#c8c8c8]"><use href="#t-gear"/></svg>test</div>
      <div class="flex h-[20px] items-center pl-[26px]"><span class="flex w-[22px] pl-[6px]"><svg class="h-[10px] w-[8px]"><use href="#a-open"/></svg></span><svg class="mr-[7px] h-[15px] w-[15px]"><use href="#t-plc"/></svg>703_kotelna</div>
      <div class="flex h-[20px] items-center pl-[26px]"><span class="flex w-[22px] pl-[6px]"><svg class="h-[10px] w-[8px]"><use href="#a-open"/></svg></span><svg class="mr-[7px] h-[15px] w-[15px]"><use href="#t-plc"/></svg>704_vs_a_bazen</div>
      <div class="flex h-[20px] items-center pl-[26px]"><span class="flex w-[22px] pl-[6px]"><svg class="h-[10px] w-[8px]"><use href="#a-open"/></svg></span><svg class="mr-[7px] h-[15px] w-[15px]"><use href="#t-plc"/></svg>706_vs</div>
      <div class="flex h-[20px] items-center pl-[26px]"><span class="flex w-[22px] pl-[6px]"><svg class="h-[10px] w-[8px]"><use href="#a-open"/></svg></span><svg class="mr-[7px] h-[15px] w-[15px]"><use href="#t-plc"/></svg>707_kotelna</div>
      <div class="flex h-[20px] items-center pl-[26px]"><span class="flex w-[22px] pl-[6px]"><svg class="h-[10px] w-[8px]"><use href="#a-open"/></svg></span><svg class="mr-[7px] h-[15px] w-[15px]" viewBox="0 0 16 16"><rect x="1" y="2" width="14" height="10" fill="#e8f2fb" stroke="#2a7cc8" stroke-width="1.4"/><rect x="9" y="13" width="5" height="2" fill="#6fa32c"/></svg>Mervis Scada</div>
      <div class="flex h-[20px] items-center pl-[4px]"><span class="flex w-[22px] pl-[3px]"><svg class="h-[8px] w-[8px]"><use href="#a-fill"/></svg></span><svg class="mr-[7px] h-[15px] w-[15px]" viewBox="0 0 16 16"><rect x="1" y="4" width="14" height="11" rx="2" fill="#2a7cc8"/><path d="M5 4 V2 H11 V4" fill="none" stroke="#2a7cc8" stroke-width="1.4"/><path d="M6 7 L11 9.5 L6 12 Z" fill="#8dc04c"/></svg>Executable projects</div>
      <div class="flex h-[20px] items-center pl-[26px]"><span class="flex w-[22px] pl-[3px]"><svg class="h-[8px] w-[8px]"><use href="#a-fill"/></svg></span><svg class="mr-[7px] h-[15px] w-[15px]"><use href="#t-fopen"/></svg>tzb</div>
      <div class="flex h-[20px] items-center pl-[48px]"><span class="flex w-[22px] pl-[6px]"><svg class="h-[10px] w-[8px]"><use href="#a-open"/></svg></span><svg class="mr-[7px] h-[15px] w-[15px]" viewBox="0 0 16 16"><rect x="1" y="4" width="14" height="11" fill="#8f8f8f"/><rect x="3" y="6" width="10" height="7" fill="#d9d9d9"/><circle cx="8" cy="9" r="2.6" fill="none" stroke="#777"/><path d="M5 4 V2 H11 V4" fill="none" stroke="#2a7cc8"/></svg>References</div>
      <div class="flex h-[20px] items-center pl-[48px]"><span class="flex w-[22px] pl-[3px]"><svg class="h-[8px] w-[8px]"><use href="#a-fill"/></svg></span><svg class="mr-[7px] h-[15px] w-[15px]"><use href="#t-folder"/></svg>Globals</div>
      <div class="flex h-[20px] items-center pl-[92px]"><svg class="mr-[7px] h-[15px] w-[15px]"><use href="#t-file"/></svg>generated<span class="text-[#a3a8ae]">.Mixed.st</span></div>
      <div class="flex h-[20px] items-center pl-[70px]"><svg class="mr-[7px] h-[15px] w-[15px]"><use href="#t-file"/></svg>bazen<span class="text-[#a3a8ae]">.Program.fbd</span></div>
      <div class="flex h-[20px] items-center pl-[70px]"><svg class="mr-[7px] h-[15px] w-[15px]"><use href="#t-file"/></svg>hw_io<span class="text-[#a3a8ae]">.Mixed.st</span></div>
      <div class="flex h-[20px] items-center pl-[70px]"><svg class="mr-[7px] h-[15px] w-[15px]"><use href="#t-file"/></svg>main<span class="text-[#a3a8ae]">.Program.fbd</span></div>
      <div class="flex h-[20px] items-center pl-[70px]"><svg class="mr-[7px] h-[15px] w-[15px]"><use href="#t-file"/></svg>VazbaTuvKaskada<span class="text-[#a3a8ae]">.FunctionBlock.st</span></div>
      <div class="flex h-[20px] items-center pl-[4px]"><span class="flex w-[22px] pl-[6px]"><svg class="h-[10px] w-[8px]"><use href="#a-open"/></svg></span><svg class="mr-[7px] h-[15px] w-[15px]" viewBox="0 0 16 16"><path d="M1 5 L8 1 L15 5 L8 9 Z" fill="#2a7cc8"/><path d="M1 8 L8 12 L15 8 M1 11 L8 15 L15 11" fill="none" stroke="#7fb5e4" stroke-width="1.6"/></svg>Library projects</div>
      <div class="flex h-[20px] items-center pl-[4px]"><span class="flex w-[22px] pl-[3px]"><svg class="h-[8px] w-[8px]"><use href="#a-fill"/></svg></span><svg class="mr-[7px] h-[15px] w-[15px]" viewBox="0 0 16 16"><path d="M2 3 H10 L12 5 V15 H2 Z" fill="#d9e9f7" stroke="#9fbcd8"/><circle cx="10" cy="11" r="3.5" fill="#1f73c4"/><path d="M8 4 C10 1 13 1 14 1 C14 3 12 5 10 5 Z" fill="#7db53c"/></svg>HMI Projects</div>
      <div class="flex h-[20px] items-center pl-[26px]"><span class="flex w-[22px] pl-[3px]"><svg class="h-[8px] w-[8px]"><use href="#a-fill"/></svg></span><svg class="mr-[7px] h-[15px] w-[15px]"><use href="#t-hmif"/></svg>hmi</div>
      <div class="flex h-[20px] items-center pl-[48px]"><span class="flex w-[22px] pl-[6px]"><svg class="h-[10px] w-[8px]"><use href="#a-open"/></svg></span><svg class="mr-[7px] h-[15px] w-[15px]"><use href="#t-folder"/></svg>Resources</div>
      <div class="flex h-[20px] items-center pl-[70px]"><svg class="mr-[7px] h-[15px] w-[15px]"><use href="#t-graph"/></svg>bazen<span class="text-[#a3a8ae]">.program.graph</span></div>
      <div class="flex h-[20px] items-center pl-[70px]"><svg class="mr-[7px] h-[15px] w-[15px]"><use href="#t-graph"/></svg>Dhw_v1.7<span class="text-[#a3a8ae]">.fb.graph</span></div>
      <div class="flex h-[20px] items-center pl-[70px]"><svg class="mr-[7px] h-[15px] w-[15px]"><use href="#t-table"/></svg>dptable<span class="text-[#a3a8ae]">.terminal.dptable</span></div>
      <div class="flex h-[20px] items-center pl-[70px]"><svg class="mr-[7px] h-[15px] w-[15px]"><use href="#t-graph"/></svg>kotelna<span class="text-[#a3a8ae]">.program.graph</span></div>
      <div class="flex h-[20px] items-center pl-[70px]"><svg class="mr-[7px] h-[15px] w-[15px]"><use href="#t-graph"/></svg>mervis<span class="text-[#a3a8ae]">.terminal.graph</span></div>
      <div class="flex h-[20px] items-center pl-[70px]"><svg class="mr-[7px] h-[15px] w-[15px]"><use href="#t-graph"/></svg>vs<span class="text-[#a3a8ae]">.program.graph</span></div>
      <div class="flex h-[20px] items-center pl-[26px]"><span class="flex w-[22px] pl-[6px]"><svg class="h-[10px] w-[8px]"><use href="#a-open"/></svg></span><svg class="mr-[7px] h-[15px] w-[15px]"><use href="#t-hmif"/></svg>Lib.Esg.Hmi</div>
      <div class="flex h-[20px] items-center pl-[4px]"><span class="flex w-[22px] pl-[3px]"><svg class="h-[8px] w-[8px]"><use href="#a-fill"/></svg></span><svg class="mr-[7px] h-[15px] w-[15px]" viewBox="0 0 16 16"><rect x="1" y="3" width="14" height="11" rx="2" fill="#a0a0a0"/><circle cx="9" cy="8" r="3.6" fill="#dff0c8" stroke="#7db53c"/></svg>History</div>
      <div class="flex h-[20px] items-center pl-[48px]"><svg class="mr-[7px] h-[15px] w-[15px]" viewBox="0 0 16 16"><rect x="1" y="2" width="3" height="12" fill="#2a7cc8"/><rect x="4" y="4" width="11" height="8" fill="#333"/><path d="M6 5 V11 M9 5 V11 M12 5 V11" stroke="#b33" stroke-width="1.4"/></svg>[Default Chart Log]</div>
    </div>
    <div class="flex h-[24px]">
      <div class="flex w-[73px] items-center gap-[4px] border-b border-r border-[#999] bg-gradient-to-b from-[#f2f2f2] to-[#dcdcdc] pl-[6px] text-[#555]"><svg class="h-[13px] w-[13px]" viewBox="0 0 13 13"><rect x="2" y="1" width="9" height="11" fill="#2a7cc8"/><text x="6.5" y="10" font-size="8" fill="#fff" text-anchor="middle" font-family="Open Sans">?</text></svg>FUPL...</div>
      <div class="flex w-[68px] items-center gap-[4px] border-b border-r border-[#999] bg-gradient-to-b from-[#f2f2f2] to-[#dcdcdc] pl-[6px] text-[#555]"><svg class="h-[13px] w-[13px]"><use href="#t-file"/></svg>HMI...</div>
      <div class="flex w-[72px] items-center gap-[4px] border-b border-r border-[#999] bg-gradient-to-b from-[#f2f2f2] to-[#dcdcdc] pl-[6px] text-[#555]"><svg class="h-[13px] w-[13px]" viewBox="0 0 13 13"><path d="M2 1 H9 L11 3 V12 H2 Z" fill="#cfe3f5" stroke="#2a7cc8"/></svg>Obje...</div>
      <div class="flex h-[25px] w-[72px] items-center gap-[3px] border-b border-r border-[#888] bg-white pl-[6px]"><svg class="h-[15px] w-[15px]" viewBox="0 0 16 16"><rect x=".5" y=".5" width="15" height="15" fill="#fff" stroke="#c94a4a"/><rect x="2" y="9" width="12" height="5" fill="#c42033"/><path d="M8 3 V10 M4 6 H12 V10 M4 6 V10" stroke="#c42033" stroke-width="1.3" fill="none"/></svg>Solut...</div>
    </div>
  </div>

  <!-- center -->
  <div class="ml-[7px] flex w-[1179px] flex-col">
    <!-- doc tabs -->
    <div class="flex h-[23px] items-end pl-[11px]">
      <div class="flex h-[22px] w-[102px] items-center gap-[5px] bg-gradient-to-b from-[#eef3fb] to-[#c6d7ec] pl-[17px] [clip-path:polygon(10px_0,100%_0,100%_100%,0_100%)]"><svg class="h-[15px] w-[13px]"><use href="#t-graph"/></svg>kotelna</div>
      <div class="flex h-[23px] w-[95px] items-center gap-[5px] bg-[#e8ecfa] bg-gradient-to-b from-white to-[#f4f7fd] pl-[12px] font-bold [clip-path:polygon(8px_0,100%_0,100%_100%,0_100%)]"><svg class="h-[15px] w-[13px]"><use href="#t-graph"/></svg>mervis<svg class="ml-[3px] h-[11px] w-[11px]"><use href="#i-cross"/></svg></div>
      <div class="flex h-[22px] w-[108px] items-center gap-[5px] bg-gradient-to-b from-[#eef3fb] to-[#c6d7ec] pl-[12px] [clip-path:polygon(10px_0,100%_0,100%_100%,0_100%)]"><svg class="h-[15px] w-[13px]"><use href="#t-table"/></svg>Dhw_v1.5</div>
      <div class="flex h-[22px] w-[91px] items-center gap-[5px] bg-gradient-to-b from-[#eef3fb] to-[#c6d7ec] pl-[13px] [clip-path:polygon(10px_0,100%_0,100%_100%,0_100%)]"><svg class="h-[15px] w-[13px]"><use href="#t-graph"/></svg>bazen</div>
      <div class="flex h-[22px] w-[108px] items-center gap-[5px] bg-gradient-to-b from-[#eef3fb] to-[#c6d7ec] pl-[13px] [clip-path:polygon(10px_0,100%_0,100%_100%,0_100%)]"><svg class="h-[15px] w-[13px]"><use href="#t-graph"/></svg>Dhw_v1.7</div>
      <svg class="mb-[7px] ml-auto mr-[4px] h-[9px] w-[9px]" viewBox="0 0 9 9"><path d="M0 1 H9 M0 3 H9 L4.5 8 Z" fill="#444" stroke="#444"/></svg>
    </div>
    <!-- doc frame -->
    <div class="flex h-[818px] flex-col rounded-[3px] border border-[#a4aab6] bg-[#f4f6fc] pl-[3px] pr-[4px] pt-[3px]">
      <div class="flex h-[767px] bg-white ring-1 ring-[#b8bdc8]">
        <div class="w-[1152px] pt-[59px]">
          <!-- SCADA canvas -->
          <div class="relative h-[649px] w-[1152px] overflow-hidden bg-[#182e46] bg-[linear-gradient(#14283d_1px,transparent_1px),linear-gradient(90deg,#14283d_1px,transparent_1px)] bg-[size:2.4px_2.4px] text-[9.6px] leading-[19px] tracking-normal text-[#eaf2fa]">

            <!-- panel backgrounds -->
            <div class="absolute left-[296px] top-[421px] h-[204px] w-[111px] bg-[#1b3450]"></div>
            <div class="absolute left-[872px] top-[421px] h-[204px] w-[111px] bg-[#1b3450]"></div>
            <div class="absolute left-[531px] top-[339px] h-[300px] w-[123px] bg-[#1b3450]"></div>
            <div class="absolute left-[1011px] top-[339px] h-[300px] w-[123px] bg-[#1b3450]"></div>

            <!-- top strip -->
            <div class="absolute left-[3px] top-[4px] h-[23px] w-[1148px] rounded-[3px] bg-[#254a6e]"></div>
            <div class="absolute left-[6px] top-[6px] h-[19px] w-[115px] rounded-[3px] bg-[#6ca8de] text-center">15/01/2000 08:30</div>
            <div class="absolute left-[123px] top-[6px] h-[19px] w-[116px] rounded-[3px] bg-[#6ca8de] text-center">15/01/2000 08:30</div>
            <div class="absolute left-[241px] top-[6px] h-[19px] w-[115px] rounded-[3px] bg-[#6ca8de] text-center">15/01/2000 08:30</div>
            <div class="absolute left-[359px] top-[6px] h-[19px] w-[115px] rounded-[3px] bg-[#6ca8de] text-center">15/01/2000 08:30</div>
            <div class="absolute left-[515px] top-[6px] h-[19px] w-[87px] rounded-[3px] bg-[#2f5d89] text-center">Outdoor Temp</div>
            <div class="absolute left-[606px] top-[6px] h-[19px] w-[42px] rounded-[3px] bg-[#2f5d89] text-center">00.0 °C</div>
            <div class="absolute left-[652px] top-[6px] h-[19px] w-[41px] rounded-[3px] bg-[#2f5d89] text-center">00.0 °C</div>
            <div class="absolute left-[698px] top-[6px] h-[19px] w-[41px] rounded-[3px] bg-[#2f5d89] text-center">00.0 °C</div>
            <div class="absolute left-[743px] top-[6px] h-[19px] w-[42px] rounded-[3px] bg-[#2f5d89] text-center">00.0 °C</div>
            <div class="absolute left-[899px] top-[6px] h-[19px] w-[81px] rounded-[3px] bg-[#6ca8de] text-center">No. 703 and 704</div>
            <div class="absolute left-[983px] top-[6px] h-[19px] w-[81px] rounded-[3px] bg-[#6ca8de] text-center">No. 706 and 707</div>
            <div class="absolute left-[1067px] top-[6px] h-[19px] w-[80px] rounded-[3px] bg-[#6ca8de] text-center">pool</div>

            <div class="absolute left-[6px] top-[28px] h-[19px] w-[116px] overflow-hidden whitespace-nowrap">PLC Time Boiler Room 703</div>
            <div class="absolute left-[130px] top-[28px] h-[19px] whitespace-nowrap">PLC Time HS 704+Pool</div>
            <div class="absolute left-[257px] top-[28px] h-[19px] whitespace-nowrap">PLC Time HS 706</div>
            <div class="absolute left-[360px] top-[28px] h-[19px] whitespace-nowrap">PLC Time Boiler Room 707</div>
            <div class="absolute left-[607px] top-[28px] h-[19px] w-[40px] text-center">703</div>
            <div class="absolute left-[653px] top-[28px] h-[19px] w-[40px] text-center">704</div>
            <div class="absolute left-[698px] top-[28px] h-[19px] w-[40px] text-center">706</div>
            <div class="absolute left-[744px] top-[28px] h-[19px] w-[40px] text-center">707</div>

            <div class="absolute left-[23px] top-[56px] h-[22px] w-[57px] rounded-[3px] bg-[#6ca8de] text-center leading-[23px]">RESET</div>
            <div class="absolute left-[1076px] top-[56px] h-[22px] w-[58px] rounded-[3px] bg-[#6ca8de] text-center leading-[23px]">RESET</div>

            <!-- fault column: total left -->
            <div class="absolute left-[23px] top-[80px] flex w-[187px] flex-col gap-[2.6px]">
              <div class="mb-[0.4px] h-[19px] rounded-[3px] bg-[#d12d3d] text-center leading-[20px]">TOTAL Faults</div>
              <div class="flex gap-[3px]"><div class="h-[19px] w-[165px] whitespace-nowrap rounded-[3px] bg-[#366a9b] pl-[5px]">Methane CH4 Sensor</div><div class="h-[19px] w-[19px] rounded-[3px] bg-[#366a9b]"><svg class="h-[19px] w-[19px]"><use href="#i-bell"/></svg></div></div>
              <div class="flex gap-[3px]"><div class="h-[19px] w-[165px] whitespace-nowrap rounded-[3px] bg-[#366a9b] pl-[5px]">Methane CH4 Stage 2</div><div class="h-[19px] w-[19px] rounded-[3px] bg-[#366a9b]"><svg class="h-[19px] w-[19px]"><use href="#i-bell"/></svg></div></div>
              <div class="flex gap-[3px]"><div class="h-[19px] w-[165px] whitespace-nowrap rounded-[3px] bg-[#366a9b] pl-[5px]">Boiler Room Ambient Thermostat</div><div class="h-[19px] w-[19px] rounded-[3px] bg-[#366a9b]"><svg class="h-[19px] w-[19px]"><use href="#i-bell"/></svg></div></div>
              <div class="flex gap-[3px]"><div class="h-[19px] w-[165px] whitespace-nowrap rounded-[3px] bg-[#366a9b] pl-[5px]">Boiler Room Ambient Thermostat</div><div class="h-[19px] w-[19px] rounded-[3px] bg-[#366a9b]"><svg class="h-[19px] w-[19px]"><use href="#i-bell"/></svg></div></div>
              <div class="flex gap-[3px]"><div class="h-[19px] w-[165px] whitespace-nowrap rounded-[3px] bg-[#366a9b] pl-[5px]">System Pressure Switch</div><div class="h-[19px] w-[19px] rounded-[3px] bg-[#366a9b]"><svg class="h-[19px] w-[19px]"><use href="#i-bell"/></svg></div></div>
              <div class="flex gap-[3px]"><div class="h-[19px] w-[165px] whitespace-nowrap rounded-[3px] bg-[#366a9b] pl-[5px]">System Pressure Measuring Sensor</div><div class="h-[19px] w-[19px] rounded-[3px] bg-[#366a9b]"><svg class="h-[19px] w-[19px]"><use href="#i-bell"/></svg></div></div>
              <div class="flex gap-[3px]"><div class="h-[19px] w-[165px] whitespace-nowrap rounded-[3px] bg-[#366a9b] pl-[5px]">Boiler Room E-STOP Button</div><div class="h-[19px] w-[19px] rounded-[3px] bg-[#366a9b]"><svg class="h-[19px] w-[19px]"><use href="#i-bell"/></svg></div></div>
              <div class="h-[19px] rounded-[3px] bg-[#ff8000] text-center">General Faults</div>
              <div class="flex gap-[3px]"><div class="h-[19px] w-[165px] whitespace-nowrap rounded-[3px] bg-[#366a9b] pl-[5px]">Boiler</div><div class="h-[19px] w-[19px] rounded-[3px] bg-[#366a9b]"><svg class="h-[19px] w-[19px]"><use href="#i-bell"/></svg></div></div>
              <div class="flex gap-[3px]"><div class="h-[19px] w-[165px] whitespace-nowrap rounded-[3px] bg-[#366a9b] pl-[5px]">Methane CH4 Stage 1</div><div class="h-[19px] w-[19px] rounded-[3px] bg-[#366a9b]"><svg class="h-[19px] w-[19px]"><use href="#i-bell"/></svg></div></div>
              <div class="flex gap-[3px]"><div class="h-[19px] w-[165px] whitespace-nowrap rounded-[3px] bg-[#366a9b] pl-[5px]">Pump to Heat Station</div><div class="h-[19px] w-[19px] rounded-[3px] bg-[#366a9b]"><svg class="h-[19px] w-[19px]"><use href="#i-bell"/></svg></div></div>
            </div>
            <!-- comm left -->
            <div class="absolute left-[212px] top-[80px] flex w-[187px] flex-col gap-[2.6px]">
              <div class="mb-[0.4px] h-[19px] rounded-[3px] bg-[#d12d3d] text-center leading-[20px]">Communication Faults</div>
              <div class="flex gap-[3px]"><div class="h-[19px] w-[165px] whitespace-nowrap rounded-[3px] bg-[#366a9b] pl-[5px]">Wago KBUS - Master PLC Fault</div><div class="h-[19px] w-[19px] rounded-[3px] bg-[#366a9b]"><svg class="h-[19px] w-[19px]"><use href="#i-bell"/></svg></div></div>
              <div class="flex gap-[3px]"><div class="h-[19px] w-[165px] whitespace-nowrap rounded-[3px] bg-[#366a9b] pl-[5px]">Heat Exchanger Station</div><div class="h-[19px] w-[19px] rounded-[3px] bg-[#366a9b]"><svg class="h-[19px] w-[19px]"><use href="#i-bell"/></svg></div></div>
            </div>
            <!-- comm right -->
            <div class="absolute left-[757px] top-[80px] flex w-[187px] flex-col gap-[2.6px]">
              <div class="mb-[0.4px] h-[19px] rounded-[3px] bg-[#d12d3d] text-center leading-[20px]">Communication Faults</div>
              <div class="flex gap-[3px]"><div class="h-[19px] w-[165px] whitespace-nowrap rounded-[3px] bg-[#366a9b] pl-[5px]">Wago KBUS - Master PLC Fault</div><div class="h-[19px] w-[19px] rounded-[3px] bg-[#366a9b]"><svg class="h-[19px] w-[19px]"><use href="#i-bell"/></svg></div></div>
            </div>
            <!-- total right -->
            <div class="absolute left-[947px] top-[80px] flex w-[187px] flex-col gap-[2.6px]">
              <div class="mb-[0.4px] h-[19px] rounded-[3px] bg-[#d12d3d] text-center leading-[20px]">TOTAL Faults</div>
              <div class="flex gap-[3px]"><div class="h-[19px] w-[165px] whitespace-nowrap rounded-[3px] bg-[#366a9b] pl-[4px]">Boiler Room Ambient Thermostat</div><div class="h-[19px] w-[19px] rounded-[3px] bg-[#366a9b]"><svg class="h-[19px] w-[19px]"><use href="#i-bell"/></svg></div></div>
              <div class="flex gap-[3px]"><div class="h-[19px] w-[165px] whitespace-nowrap rounded-[3px] bg-[#366a9b] pl-[4px]">Boiler Room Flooding</div><div class="h-[19px] w-[19px] rounded-[3px] bg-[#366a9b]"><svg class="h-[19px] w-[19px]"><use href="#i-bell"/></svg></div></div>
              <div class="flex gap-[3px]"><div class="h-[19px] w-[165px] whitespace-nowrap rounded-[3px] bg-[#366a9b] pl-[4px]">Boiler Room E-STOP Button</div><div class="h-[19px] w-[19px] rounded-[3px] bg-[#366a9b]"><svg class="h-[19px] w-[19px]"><use href="#i-bell"/></svg></div></div>
              <div class="flex gap-[3px]"><div class="h-[19px] w-[165px] whitespace-nowrap rounded-[3px] bg-[#366a9b] pl-[4px]">System Pressure Measuring Sensor</div><div class="h-[19px] w-[19px] rounded-[3px] bg-[#366a9b]"><svg class="h-[19px] w-[19px]"><use href="#i-bell"/></svg></div></div>
            </div>

            <!-- gray pipe -->
            <div class="absolute left-[683px] top-[267px] h-[21px] w-[9px] rounded-[4px] bg-[#7d7d7d]"></div>
            <div class="absolute left-[683px] top-[299px] h-[15px] w-[9px] rounded-[4px] bg-[#7d7d7d]"></div>
            <div class="absolute left-[683px] top-[325px] h-[314px] w-[9px] rounded-[4px] bg-[#7d7d7d]"></div>

            <!-- red pipes -->
            <div class="absolute left-[90px] top-[561px] h-[42.8px] w-[4.8px] bg-[#f25c68]"></div>
            <div class="absolute left-[90px] top-[599px] h-[4.8px] w-[15px] bg-[#f25c68]"></div>
            <div class="absolute left-[145px] top-[599px] h-[4.8px] w-[12px] bg-[#f25c68]"></div>
            <div class="absolute left-[172px] top-[599px] h-[4.8px] w-[20px] bg-[#f25c68]"></div>
            <div class="absolute left-[228px] top-[599px] h-[4.8px] w-[342px] bg-[#f25c68]"></div>
            <div class="absolute left-[565px] top-[526px] h-[77.8px] w-[4.8px] bg-[#f25c68]"></div>
            <div class="absolute left-[458px] top-[291px] h-[312.8px] w-[4.8px] rounded-t-[2px] bg-[#f25c68]"></div>
            <div class="absolute left-[458px] top-[291px] h-[4.8px] w-[292px] rounded-t-[2px] bg-[#f25c68]"></div>
            <div class="absolute left-[745px] top-[291px] h-[312.8px] w-[4.8px] bg-[#f25c68]"></div>
            <div class="absolute left-[745px] top-[599px] h-[4.8px] w-[305px] bg-[#f25c68]"></div>
            <div class="absolute left-[1045px] top-[526px] h-[77.8px] w-[4.8px] bg-[#f25c68]"></div>
            <!-- blue pipes -->
            <div class="absolute left-[61px] top-[561px] h-[69px] w-[4.8px] bg-[#5a90ee]"></div>
            <div class="absolute left-[61px] top-[625px] h-[4.8px] w-[96px] rounded-bl-[2px] bg-[#5a90ee]"></div>
            <div class="absolute left-[172px] top-[625px] h-[4.8px] w-[12px] bg-[#5a90ee]"></div>
            <div class="absolute left-[237px] top-[625px] h-[4.8px] w-[355px] bg-[#5a90ee]"></div>
            <div class="absolute left-[587px] top-[526px] h-[104px] w-[4.8px] bg-[#5a90ee]"></div>
            <div class="absolute left-[483px] top-[318px] h-[278px] w-[4.8px] rounded-[2px] bg-[#5a90ee]"></div>
            <div class="absolute left-[483px] top-[318px] h-[4.8px] w-[240px] rounded-[2px] bg-[#5a90ee]"></div>
            <div class="absolute left-[719px] top-[318px] h-[312px] w-[4.8px] bg-[#5a90ee]"></div>
            <div class="absolute left-[483px] top-[606px] h-[22px] w-[4.8px] rounded-t-[2px] bg-[#5a90ee]"></div>
            <div class="absolute left-[719px] top-[625px] h-[4.8px] w-[353px] bg-[#5a90ee]"></div>
            <div class="absolute left-[1067px] top-[526px] h-[104px] w-[4.8px] bg-[#5a90ee]"></div>

            <!-- gas valve -->
            <div class="absolute left-[61px] top-[431px] h-[3px] w-[40px] bg-[#ffe600]"></div>
            <div class="absolute left-[98px] top-[431px] h-[20px] w-[3px] bg-[#ffe600]"></div>
            <div class="absolute left-[33px] top-[410px] w-[100px] text-center leading-[14px]">Safety Gas Valve</div>
            <div class="absolute left-[42px] top-[424px] flex h-[18px] w-[19px] items-center justify-center rounded-[2px] bg-[#234263]"><svg class="h-[8px] w-[9px]" viewBox="0 0 10 10"><path d="M1 5 H8 M5.5 2 L8.5 5 L5.5 8" fill="none" stroke="#c5d2df" stroke-width="1.3"/></svg></div>
            <div class="absolute left-[71px] top-[424px] flex h-[19px] w-[19px] items-center justify-center rounded-[3px] bg-[#d12d3d]"><svg class="h-[6px] w-[11px]" viewBox="0 0 11 6"><path d="M1.5 .5 H.5 V5.5 H1.5 M9.5 .5 H10.5 V5.5 H9.5 M2.5 1 V5 L5.5 3 L8.5 5 V1 L5.5 3 Z" fill="none" stroke="#fff" stroke-width=".9"/></svg></div>

            <!-- boiler panel -->
            <div class="absolute left-[20px] top-[450px] flex w-[120px] flex-col gap-[2.6px] rounded-[3px] bg-white p-[3px]">
              <div class="h-[19px] rounded-[3px] bg-[#366a9b] text-center">boiler</div>
              <div class="flex gap-[2px]"><div class="h-[19px] w-[55px] rounded-[3px] bg-[#366a9b] pl-[5px]">control</div><div class="relative h-[19px] w-[58px] overflow-hidden rounded-[3px] bg-[#366a9b] text-center"><div class="absolute left-0 top-0 h-[19px] w-[38px] bg-[#7ed321]"></div><span class="relative pl-[6px]">00.0 %</span></div></div>
              <div class="flex gap-[2px]"><div class="h-[19px] w-[55px] rounded-[3px] bg-[#366a9b] pl-[5px]">mode</div><div class="h-[19px] w-[19px] rounded-[3px] bg-[#6ca8de]"><svg class="h-[19px] w-[19px]"><use href="#i-auto"/></svg></div></div>
              <div class="flex gap-[2px]"><div class="h-[19px] w-[55px] overflow-hidden whitespace-nowrap rounded-[3px] bg-[#366a9b] pl-[5px]">MAN Control</div><div class="flex h-[19px] w-[58px] items-center justify-between rounded-[3px] bg-[#6ca8de] px-[5px]"><svg class="h-[6px] w-[10px]" viewBox="0 0 10 6"><path d="M0 0 H10 L5 6 Z" fill="#fff"/></svg>0 %<svg class="h-[6px] w-[10px]" viewBox="0 0 10 6"><path d="M0 6 H10 L5 0 Z" fill="#fff"/></svg></div></div>
              <div class="flex gap-[2px]"><div class="h-[19px] w-[55px] rounded-[3px] bg-[#366a9b] pl-[5px]">runtime</div><div class="h-[19px] w-[58px] rounded-[3px] bg-[#366a9b] pl-[1px]">00.0 hours</div></div>
            </div>

            <!-- setpoint column -->
            <div class="absolute left-[188px] top-[436px] h-[14px] rounded-[2px] bg-[#1b3450] leading-[14px] whitespace-nowrap">Req. Temperature</div>
            <div class="absolute left-[188px] top-[452px] h-[19px] w-[60px] rounded-[3px] bg-[#6ca8de] text-center leading-[20px]">AUT</div>
            <div class="absolute left-[188px] top-[475px] h-[14px] rounded-[2px] bg-[#1b3450] leading-[14px] whitespace-nowrap">Req. Temp. Offset</div>
            <div class="absolute left-[188px] top-[491px] flex h-[19px] w-[60px] items-center justify-between rounded-[3px] bg-[#6ca8de] px-[4px] pt-[1px]"><svg class="h-[6px] w-[10px]" viewBox="0 0 10 6"><path d="M0 0 H10 L5 6 Z" fill="#fff"/></svg>00 °C<svg class="h-[6px] w-[10px]" viewBox="0 0 10 6"><path d="M0 6 H10 L5 0 Z" fill="#fff"/></svg></div>
            <div class="absolute left-[188px] top-[513px] h-[14px] rounded-[2px] bg-[#1b3450] leading-[14px] whitespace-nowrap">Manual Req. Temp</div>
            <div class="absolute left-[188px] top-[529px] flex h-[19px] w-[60px] items-center justify-between rounded-[3px] bg-[#6ca8de] px-[4px] pt-[1px]"><svg class="h-[6px] w-[10px]" viewBox="0 0 10 6"><path d="M0 0 H10 L5 6 Z" fill="#fff"/></svg>00 °C<svg class="h-[6px] w-[10px]" viewBox="0 0 10 6"><path d="M0 6 H10 L5 0 Z" fill="#fff"/></svg></div>
            <div class="absolute left-[188px] top-[552px] h-[14px] rounded-[2px] bg-[#1b3450] leading-[14px] whitespace-nowrap">Final Target Temp</div>
            <div class="absolute left-[189px] top-[567px] h-[19px] w-[42px] rounded-[3px] bg-[#366a9b] text-center leading-[21px]">00.0 °C</div>

            <!-- boxes on pipe -->
            <div class="absolute left-[102px] top-[589px] h-[24px] w-[43px] rounded-[3px] border-2 border-[#f25c68] bg-[#366a9b] text-center leading-[21px]">00.0 °C</div>
            <div class="absolute left-[155px] top-[589px] h-[50px] w-[19px] overflow-hidden rounded-[5px] bg-[#5a90ee]"><div class="h-[24px] bg-[#f25c68]"></div></div>
            <div class="absolute left-[189px] top-[589px] h-[24px] w-[42px] rounded-[3px] border-2 border-[#f25c68] bg-[#366a9b] text-center leading-[21px]">00.0 °C</div>
            <div class="absolute left-[181px] top-[615px] h-[24px] w-[58px] rounded-[3px] border-2 border-[#5a90ee] bg-[#366a9b] text-center leading-[21px]">00.0 kPa</div>
            <div class="absolute left-[814px] top-[589px] h-[24px] w-[42px] rounded-[3px] border-2 border-[#f25c68] bg-[#366a9b] text-center leading-[21px]">00.0 °C</div>

            <!-- heating branch pump -->
            <div class="absolute left-[445px] top-[503px] h-[37px] w-[29px] bg-[#1b3450]"></div>
            <div class="absolute left-[439px] top-[474px] h-[24px] w-[42px] rounded-[3px] border-2 border-[#f25c68] bg-[#366a9b] text-center leading-[21px]">00.0 °C</div>
            <svg class="absolute left-[445px] top-[503px] h-[38px] w-[30px]"><use href="#pump-up"/></svg>
            <div class="absolute left-[423px] top-[512px] h-[19px] w-[19px] rounded-[3px] bg-[#6ca8de]"><svg class="h-[19px] w-[19px]"><use href="#i-auto"/></svg></div>

            <!-- fans -->
            <div class="absolute left-[296px] top-[300px] w-[76px] text-center leading-[14px] whitespace-nowrap">boiler room fan</div>
            <div class="absolute left-[296px] top-[313px] flex h-[23px] w-[67px] gap-[3px] rounded-[3px] bg-[#254a6e] p-[2px] pl-[3px]">
              <div class="h-[19px] w-[19px] rounded-[3px] bg-[#366a9b]"><svg class="h-[19px] w-[19px]"><use href="#i-fan"/></svg></div>
              <div class="h-[19px] w-[19px] rounded-[3px] bg-[#6ca8de]"><svg class="h-[19px] w-[19px]"><use href="#i-auto"/></svg></div>
              <div class="h-[19px] w-[19px] rounded-[3px] bg-[#6ca8de]"><svg class="h-[19px] w-[19px]"><use href="#i-cal"/></svg></div>
            </div>
            <div class="absolute left-[872px] top-[300px] w-[76px] text-center leading-[14px] whitespace-nowrap">boiler room fan</div>
            <div class="absolute left-[872px] top-[313px] flex h-[23px] w-[67px] gap-[3px] rounded-[3px] bg-[#254a6e] p-[2px] pl-[3px]">
              <div class="h-[19px] w-[19px] rounded-[3px] bg-[#366a9b]"><svg class="h-[19px] w-[19px]"><use href="#i-fan"/></svg></div>
              <div class="h-[19px] w-[19px] rounded-[3px] bg-[#6ca8de]"><svg class="h-[19px] w-[19px]"><use href="#i-auto"/></svg></div>
              <div class="h-[19px] w-[19px] rounded-[3px] bg-[#6ca8de]"><svg class="h-[19px] w-[19px]"><use href="#i-cal"/></svg></div>
            </div>

            <!-- CH unit left -->
            <div class="absolute left-[296px] top-[421px] h-[228px] w-[111px]">
              <div class="absolute left-0 top-[-16px] w-[111px] text-center leading-[14px]">CH</div>
              <div class="flex h-[24px] w-[111px] gap-[2.6px] rounded-[3px] bg-[#254a6e] pl-[3px] pt-[2.5px]">
                <div class="h-[19px] w-[19px] rounded-[3px] bg-[#7e7e7e]"><svg class="h-[19px] w-[19px]"><use href="#i-rec"/></svg></div>
                <div class="h-[19px] w-[19px] rounded-[3px] bg-[#6ca8de]"><svg class="h-[19px] w-[19px]"><use href="#i-auto"/></svg></div>
                <div class="h-[19px] w-[19px] rounded-[3px] bg-[#6ca8de]"><svg class="h-[19px] w-[19px]"><use href="#i-cal"/></svg></div>
                <div class="h-[19px] w-[19px] rounded-[3px] bg-[#6ca8de]"><svg class="h-[19px] w-[19px]"><use href="#i-bell"/></svg></div>
                <div class="h-[19px] w-[19px] rounded-[3px] bg-[#6ca8de]"><svg class="h-[19px] w-[19px]"><use href="#i-gear"/></svg></div>
              </div>
              <div class="absolute left-[48px] top-[43px] h-[137px] w-[4.8px] bg-[#f25c68]"></div>
              <div class="absolute left-[99px] top-[43px] h-[132px] w-[4.8px] rounded-[2px] bg-[#5a90ee]"></div>
              <div class="absolute left-[99px] top-[185px] h-[23px] w-[4.8px] rounded-t-[2px] bg-[#5a90ee]"></div>
              <div class="absolute left-[3px] top-[31px] h-[19px] w-[40px] rounded-[3px] bg-[#366a9b] text-center leading-[20px]">00.0 °C</div>
              <svg class="absolute left-[46px] top-[28px] h-[10px] w-[8px]" viewBox="0 0 8 10"><path d="M4 10 V1 M1 4 L4 1 L7 4" fill="none" stroke="#fff" stroke-width="1.2"/></svg>
              <svg class="absolute left-[97px] top-[28px] h-[10px] w-[8px]" viewBox="0 0 8 10"><path d="M4 0 V9 M1 6 L4 9 L7 6" fill="none" stroke="#e0e6ee" stroke-width="1.2"/></svg>
              <div class="absolute left-[10px] top-[53px] h-[24px] w-[48px] rounded-[3px] bg-[#f25c68]"><div class="mx-[3px] mt-[2px] h-[7px] bg-[#366a9b]"></div><div class="absolute inset-x-0 top-[3px] text-center font-bold text-white">00.0 °C</div></div>
              <svg class="absolute left-[36px] top-[82px] h-[38px] w-[30px]"><use href="#pump-up"/></svg>
              <div class="absolute left-[15px] top-[91px] h-[19px] w-[19px] rounded-[3px] bg-[#6ca8de]"><svg class="h-[19px] w-[19px]"><use href="#i-play"/></svg></div>
              <div class="absolute left-[61px] top-[136px] h-[2px] w-[38px] bg-[#5a90ee]"></div>
              <div class="absolute left-[17px] top-[130px] h-[16px] w-[16px] border border-[#111] bg-gradient-to-r from-white to-[#bbb]"></div>
              <div class="absolute left-[33px] top-[132px] h-[12px] w-[12px] bg-[#111]"><div class="mt-[3px] h-[2px] bg-[#777]"></div></div>
              <svg class="absolute left-[45px] top-[125px] h-[27px] w-[14px]"><use href="#valve"/></svg>
              <div class="absolute left-[3px] top-[151px] h-[19px] w-[40px] rounded-[3px] bg-[#2f5d89] text-center leading-[20px]">00.0 %</div>
            </div>
            <!-- CH unit right -->
            <div class="absolute left-[872px] top-[421px] h-[228px] w-[111px]">
              <div class="absolute left-0 top-[-16px] w-[111px] text-center leading-[14px]">CH</div>
              <div class="flex h-[24px] w-[111px] gap-[2.6px] rounded-[3px] bg-[#254a6e] pl-[3px] pt-[2.5px]">
                <div class="h-[19px] w-[19px] rounded-[3px] bg-[#7e7e7e]"><svg class="h-[19px] w-[19px]"><use href="#i-rec"/></svg></div>
                <div class="h-[19px] w-[19px] rounded-[3px] bg-[#6ca8de]"><svg class="h-[19px] w-[19px]"><use href="#i-auto"/></svg></div>
                <div class="h-[19px] w-[19px] rounded-[3px] bg-[#6ca8de]"><svg class="h-[19px] w-[19px]"><use href="#i-cal"/></svg></div>
                <div class="h-[19px] w-[19px] rounded-[3px] bg-[#6ca8de]"><svg class="h-[19px] w-[19px]"><use href="#i-bell"/></svg></div>
                <div class="h-[19px] w-[19px] rounded-[3px] bg-[#6ca8de]"><svg class="h-[19px] w-[19px]"><use href="#i-gear"/></svg></div>
              </div>
              <div class="absolute left-[48px] top-[43px] h-[137px] w-[4.8px] bg-[#f25c68]"></div>
              <div class="absolute left-[99px] top-[43px] h-[132px] w-[4.8px] rounded-[2px] bg-[#5a90ee]"></div>
              <div class="absolute left-[99px] top-[185px] h-[23px] w-[4.8px] rounded-t-[2px] bg-[#5a90ee]"></div>
              <div class="absolute left-[3px] top-[31px] h-[19px] w-[40px] rounded-[3px] bg-[#366a9b] text-center leading-[20px]">00.0 °C</div>
              <svg class="absolute left-[46px] top-[28px] h-[10px] w-[8px]" viewBox="0 0 8 10"><path d="M4 10 V1 M1 4 L4 1 L7 4" fill="none" stroke="#fff" stroke-width="1.2"/></svg>
              <svg class="absolute left-[97px] top-[28px] h-[10px] w-[8px]" viewBox="0 0 8 10"><path d="M4 0 V9 M1 6 L4 9 L7 6" fill="none" stroke="#e0e6ee" stroke-width="1.2"/></svg>
              <div class="absolute left-[10px] top-[53px] h-[24px] w-[48px] rounded-[3px] bg-[#f25c68]"><div class="mx-[3px] mt-[2px] h-[7px] bg-[#366a9b]"></div><div class="absolute inset-x-0 top-[3px] text-center font-bold text-white">00.0 °C</div></div>
              <svg class="absolute left-[36px] top-[82px] h-[38px] w-[30px]"><use href="#pump-up"/></svg>
              <div class="absolute left-[15px] top-[91px] h-[19px] w-[19px] rounded-[3px] bg-[#6ca8de]"><svg class="h-[19px] w-[19px]"><use href="#i-play"/></svg></div>
              <div class="absolute left-[61px] top-[136px] h-[2px] w-[38px] bg-[#5a90ee]"></div>
              <div class="absolute left-[17px] top-[130px] h-[16px] w-[16px] border border-[#111] bg-gradient-to-r from-white to-[#bbb]"></div>
              <div class="absolute left-[33px] top-[132px] h-[12px] w-[12px] bg-[#111]"><div class="mt-[3px] h-[2px] bg-[#777]"></div></div>
              <svg class="absolute left-[45px] top-[125px] h-[27px] w-[14px]"><use href="#valve"/></svg>
              <div class="absolute left-[3px] top-[151px] h-[19px] w-[40px] rounded-[3px] bg-[#2f5d89] text-center leading-[20px]">00.0 %</div>
            </div>

            <!-- DHW unit left -->
            <div class="absolute left-[531px] top-[339px] h-[300px] w-[123px]">
              <div class="absolute left-0 top-[-16px] w-[114px] text-center leading-[14px]">DHW</div>
              <div class="flex h-[24px] w-[111px] gap-[2.6px] rounded-[3px] bg-[#254a6e] pl-[3px] pt-[2.5px]">
                <div class="h-[19px] w-[19px] rounded-[3px] bg-[#366a9b]"><svg class="h-[19px] w-[19px]"><use href="#i-gear"/></svg></div>
                <div class="h-[19px] w-[19px] rounded-[3px] bg-[#6ca8de]"><svg class="h-[19px] w-[19px]"><use href="#i-auto"/></svg></div>
                <div class="h-[19px] w-[19px] rounded-[3px] bg-[#6ca8de]"><svg class="h-[19px] w-[19px]"><use href="#i-cal"/></svg></div>
                <div class="h-[19px] w-[19px] rounded-[3px] bg-[#6ca8de]"><svg class="h-[19px] w-[19px]"><use href="#i-bell"/></svg></div>
                <div class="h-[19px] w-[19px] rounded-[3px] bg-[#6ca8de]"><svg class="h-[19px] w-[19px]"><use href="#i-gear"/></svg></div>
              </div>
              <div class="absolute left-[11px] top-[29px] leading-[14px]">outlet</div>
              <svg class="absolute left-[44px] top-[31px] h-[10px] w-[8px]" viewBox="0 0 8 10"><path d="M4 10 V1 M1 4 L4 1 L7 4" fill="none" stroke="#fff" stroke-width="1.2"/></svg>
              <svg class="absolute left-[92px] top-[31px] h-[10px] w-[8px]" viewBox="0 0 8 10"><path d="M4 0 V9 M1 6 L4 9 L7 6" fill="none" stroke="#fff" stroke-width="1.2"/></svg>
              <div class="absolute left-[46px] top-[46px] h-[40px] w-[4.8px] rounded-t-[2px] bg-[#ff8000]"></div>
              <div class="absolute left-[36px] top-[53px] h-[24px] w-[24px] rounded-[4px] border-[3px] border-[#ff8000] bg-[#366a9b]"><svg class="h-[18px] w-[18px]"><use href="#i-sensor"/></svg></div>
              <div class="absolute left-[94px] top-[46px] h-[118px] w-[4.8px] rounded-t-[2px] bg-[#fdc896]"></div>
              <div class="absolute left-[77px] top-[159px] h-[4.8px] w-[22px] bg-[#fdc896]"></div>
              <div class="absolute left-[104px] top-[56px] h-[19px] w-[19px] rounded-[3px] bg-[#6ca8de]"><svg class="h-[19px] w-[19px]"><use href="#i-cal"/></svg></div>
              <div class="absolute left-[104px] top-[77px] h-[19px] w-[19px] rounded-[3px] bg-[#6ca8de]"><svg class="h-[19px] w-[19px]"><use href="#i-auto"/></svg></div>
              <svg class="absolute left-[81px] top-[92px] h-[38px] w-[30px]"><use href="#pump-down"/></svg>
              <div class="absolute left-[29px] top-[185px] h-[4px] w-[39px] rounded-b-[3px] bg-[#333]"></div>
              <div class="absolute left-[20px] top-[85px] h-[102px] w-[57px] rounded-[4px] border border-[#222] bg-gradient-to-r from-[#8f8f8f] via-[#f8f8f8] via-30% to-[#fdfdfd]">
                <div class="h-[3px] rounded-t-[4px] bg-gradient-to-r from-[#bbb] to-white"></div>
              </div>
              <div class="absolute left-[24px] top-[92px] h-[24px] w-[48px] rounded-[3px] bg-[#ff8000]"><div class="mx-[3px] mt-[2px] h-[7px] bg-[#366a9b]"></div><div class="absolute inset-x-0 top-[3px] text-center font-bold text-white">00.0 °C</div></div>
              <div class="absolute left-[24px] top-[118px] h-[19px] w-[48px] rounded-[3px] bg-[#366a9b] text-center leading-[20px]">00.0 °C</div>
              <div class="absolute left-[20px] top-[141px] w-[57px] text-center leading-[13px] text-[#2a3f55]">act. req.<br>temp.</div>
              <svg class="absolute left-[21px] top-[216px] h-[38px] w-[30px]"><use href="#pump-up"/></svg>
              <div class="absolute left-0 top-[226px] h-[19px] w-[20px] rounded-[3px] bg-[#6ca8de]"><svg class="h-[19px] w-[19px]"><use href="#i-auto"/></svg></div>
            </div>
            <!-- DHW unit right -->
            <div class="absolute left-[1011px] top-[339px] h-[300px] w-[123px]">
              <div class="absolute left-0 top-[-16px] w-[114px] text-center leading-[14px]">DHW</div>
              <div class="flex h-[24px] w-[111px] gap-[2.6px] rounded-[3px] bg-[#254a6e] pl-[3px] pt-[2.5px]">
                <div class="h-[19px] w-[19px] rounded-[3px] bg-[#366a9b]"><svg class="h-[19px] w-[19px]"><use href="#i-gear"/></svg></div>
                <div class="h-[19px] w-[19px] rounded-[3px] bg-[#6ca8de]"><svg class="h-[19px] w-[19px]"><use href="#i-auto"/></svg></div>
                <div class="h-[19px] w-[19px] rounded-[3px] bg-[#6ca8de]"><svg class="h-[19px] w-[19px]"><use href="#i-cal"/></svg></div>
                <div class="h-[19px] w-[19px] rounded-[3px] bg-[#6ca8de]"><svg class="h-[19px] w-[19px]"><use href="#i-bell"/></svg></div>
                <div class="h-[19px] w-[19px] rounded-[3px] bg-[#6ca8de]"><svg class="h-[19px] w-[19px]"><use href="#i-gear"/></svg></div>
              </div>
              <div class="absolute left-[11px] top-[29px] leading-[14px]">outlet</div>
              <svg class="absolute left-[44px] top-[31px] h-[10px] w-[8px]" viewBox="0 0 8 10"><path d="M4 10 V1 M1 4 L4 1 L7 4" fill="none" stroke="#fff" stroke-width="1.2"/></svg>
              <svg class="absolute left-[92px] top-[31px] h-[10px] w-[8px]" viewBox="0 0 8 10"><path d="M4 0 V9 M1 6 L4 9 L7 6" fill="none" stroke="#fff" stroke-width="1.2"/></svg>
              <div class="absolute left-[46px] top-[46px] h-[40px] w-[4.8px] rounded-t-[2px] bg-[#ff8000]"></div>
              <div class="absolute left-[36px] top-[53px] h-[24px] w-[24px] rounded-[4px] border-[3px] border-[#ff8000] bg-[#366a9b]"><svg class="h-[18px] w-[18px]"><use href="#i-sensor"/></svg></div>
              <div class="absolute left-[94px] top-[46px] h-[118px] w-[4.8px] rounded-t-[2px] bg-[#fdc896]"></div>
              <div class="absolute left-[77px] top-[159px] h-[4.8px] w-[22px] bg-[#fdc896]"></div>
              <div class="absolute left-[104px] top-[56px] h-[19px] w-[19px] rounded-[3px] bg-[#6ca8de]"><svg class="h-[19px] w-[19px]"><use href="#i-cal"/></svg></div>
              <div class="absolute left-[104px] top-[77px] h-[19px] w-[19px] rounded-[3px] bg-[#6ca8de]"><svg class="h-[19px] w-[19px]"><use href="#i-auto"/></svg></div>
              <svg class="absolute left-[81px] top-[92px] h-[38px] w-[30px]"><use href="#pump-down"/></svg>
              <div class="absolute left-[29px] top-[185px] h-[4px] w-[39px] rounded-b-[3px] bg-[#333]"></div>
              <div class="absolute left-[20px] top-[85px] h-[102px] w-[57px] rounded-[4px] border border-[#222] bg-gradient-to-r from-[#8f8f8f] via-[#f8f8f8] via-30% to-[#fdfdfd]">
                <div class="h-[3px] rounded-t-[4px] bg-gradient-to-r from-[#bbb] to-white"></div>
              </div>
              <div class="absolute left-[24px] top-[92px] h-[24px] w-[48px] rounded-[3px] bg-[#ff8000]"><div class="mx-[3px] mt-[2px] h-[7px] bg-[#366a9b]"></div><div class="absolute inset-x-0 top-[3px] text-center font-bold text-white">00.0 °C</div></div>
              <div class="absolute left-[24px] top-[118px] h-[19px] w-[48px] rounded-[3px] bg-[#366a9b] text-center leading-[20px]">00.0 °C</div>
              <div class="absolute left-[20px] top-[141px] w-[57px] text-center leading-[13px] text-[#2a3f55]">act. req.<br>temp.</div>
              <svg class="absolute left-[21px] top-[216px] h-[38px] w-[30px]"><use href="#pump-up"/></svg>
              <div class="absolute left-0 top-[226px] h-[19px] w-[20px] rounded-[3px] bg-[#6ca8de]"><svg class="h-[19px] w-[19px]"><use href="#i-auto"/></svg></div>
            </div>
          </div>
        </div>
        <!-- vertical scrollbar -->
        <div class="ml-[1px] flex w-[16px] flex-col items-center justify-between bg-[#f0f0f0] py-[8px]">
          <svg class="h-[5px] w-[8px]" viewBox="0 0 8 5"><path d="M4 0 L8 5 H0 Z" fill="#c9c9c9"/></svg>
          <svg class="h-[5px] w-[8px]" viewBox="0 0 8 5"><path d="M0 0 H8 L4 5 Z" fill="#c9c9c9"/></svg>
        </div>
      </div>
      <!-- horizontal scrollbar -->
      <div class="flex h-[17px] items-center bg-[#f0f0f0] pl-[4px]">
        <svg class="h-[8px] w-[5px]" viewBox="0 0 5 8"><path d="M5 0 V8 L0 4 Z" fill="#c9c9c9"/></svg>
        <div class="ml-[9px] h-[17px] w-[1114px] bg-[#cdcdcd]"></div>
        <svg class="ml-[8px] h-[8px] w-[5px]" viewBox="0 0 5 8"><path d="M0 0 V8 L5 4 Z" fill="#c9c9c9"/></svg>
      </div>
      <!-- sheet tabs -->
      <div class="flex h-[25px] border-x border-b border-[#9aa3b1] bg-[#cfe3f8] pl-[2px] pt-[1px]">
        <div class="flex h-[21px] w-[23px] items-center justify-center border border-[#bbb] bg-[#efefef]">+</div>
        <div class="ml-[1px] flex h-[21px] w-[21px] items-center justify-center border border-[#bbb] bg-[#efefef]"><svg class="h-[8px] w-[8px]" viewBox="0 0 8 8"><path d="M0 1 H8 M0 4 H8 M0 7 H8" stroke="#444"/></svg></div>
        <div class="ml-[1px] flex h-[21px] w-[23px] items-center justify-center border border-[#bbb] bg-[#efefef]"><svg class="h-[8px] w-[7px]" viewBox="0 0 7 8"><path d="M0 0 H1.5 V8 H0 Z M7 0 V8 L2 4 Z" fill="#444"/></svg></div>
        <div class="flex h-[21px] w-[23px] items-center justify-center border border-[#bbb] bg-[#efefef]"><svg class="h-[8px] w-[5px]" viewBox="0 0 5 8"><path d="M5 0 V8 L0 4 Z" fill="#444"/></svg></div>
        <div class="flex h-[21px] w-[23px] items-center justify-center border border-[#bbb] bg-[#efefef]"><svg class="h-[8px] w-[5px]" viewBox="0 0 5 8"><path d="M0 0 V8 L5 4 Z" fill="#444"/></svg></div>
        <div class="flex h-[21px] w-[22px] items-center justify-center border border-[#bbb] bg-[#efefef]"><svg class="h-[8px] w-[7px]" viewBox="0 0 7 8"><path d="M5.5 0 H7 V8 H5.5 Z M0 0 V8 L5 4 Z" fill="#444"/></svg></div>
        <div class="ml-[2px] flex h-[23px] w-[116px] items-center justify-between border-b border-[#999] bg-white px-[8px] pt-[2px]">No. 703 and 704<svg class="h-[9px] w-[9px]"><use href="#i-cross"/></svg></div>
        <div class="flex h-[21px] w-[101px] items-center justify-center border border-[#bbb] bg-[#efefef] pt-[1px]">No. 706 and 707</div>
        <div class="ml-[1px] flex h-[21px] w-[38px] items-center justify-center border border-[#bbb] bg-[#efefef] pt-[1px]">pool</div>
      </div>
    </div>
    <!-- output tabs -->
    <div class="mt-[8px] flex h-[24px] w-full border-t-2 border-[#999]">
      <div class="flex h-[20px] w-[99px] items-center justify-center gap-[5px] border-r border-[#aaa] bg-gradient-to-b from-[#f2f2f2] to-[#dcdcdc] text-[#555]"><svg class="h-[15px] w-[13px]" viewBox="0 0 13 15"><circle cx="5.5" cy="9.5" r="5" fill="#d33"/><path d="M8 5 C8 2 11 1 12 3" fill="none" stroke="#e88a20" stroke-width="1.6"/></svg>Breakpoints</div>
      <div class="flex h-[20px] w-[76px] items-center justify-center gap-[5px] border-r border-[#aaa] bg-gradient-to-b from-[#f2f2f2] to-[#dcdcdc] text-[#555]"><svg class="h-[13px] w-[13px]" viewBox="0 0 13 13"><rect x="1" y="1" width="11" height="11" fill="#a8cd63" stroke="#6fa32c"/><rect x="3" y="3" width="7" height="7" fill="#e6f2cf"/></svg>Chart 1</div>
      <div class="flex h-[20px] w-[75px] items-center justify-center gap-[5px] border-r border-[#aaa] bg-gradient-to-b from-[#f2f2f2] to-[#dcdcdc] text-[#555]"><svg class="h-[13px] w-[13px]" viewBox="0 0 13 13"><rect x="1" y="1" width="11" height="11" fill="#a8cd63" stroke="#6fa32c"/><rect x="3" y="3" width="7" height="7" fill="#e6f2cf"/></svg>Chart 2</div>
      <div class="flex h-[20px] w-[75px] items-center justify-center gap-[5px] border-r border-[#aaa] bg-gradient-to-b from-[#f2f2f2] to-[#dcdcdc] text-[#555]"><svg class="h-[13px] w-[13px]" viewBox="0 0 13 13"><rect x="1" y="1" width="11" height="11" fill="#a8cd63" stroke="#6fa32c"/><rect x="3" y="3" width="7" height="7" fill="#e6f2cf"/></svg>Chart 3</div>
      <div class="flex h-[20px] w-[75px] items-center justify-center gap-[5px] border-r border-[#aaa] bg-gradient-to-b from-[#f2f2f2] to-[#dcdcdc] text-[#555]"><svg class="h-[13px] w-[13px]" viewBox="0 0 13 13"><rect x="1" y="1" width="11" height="11" fill="#a8cd63" stroke="#6fa32c"/><rect x="3" y="3" width="7" height="7" fill="#e6f2cf"/></svg>Chart 4</div>
      <div class="flex h-[20px] w-[101px] items-center justify-center gap-[5px] border-r border-[#aaa] bg-gradient-to-b from-[#f2f2f2] to-[#dcdcdc] text-[#555]"><svg class="h-[14px] w-[14px]" viewBox="0 0 16 16"><circle cx="6.5" cy="7" r="4.5" fill="#cfe3f5" stroke="#2a7cc8" stroke-width="1.5"/><path d="M10 10 L14.5 14.5" stroke="#2a7cc8" stroke-width="2"/></svg>Find Results</div>
      <div class="flex h-[20px] w-[102px] items-center justify-center gap-[5px] border-r border-[#aaa] bg-gradient-to-b from-[#f2f2f2] to-[#dcdcdc] text-[#555]"><svg class="h-[13px] w-[13px]" viewBox="0 0 13 13"><rect x="1" y="1" width="11" height="8" fill="#1f67b8"/><path d="M3 6 L5 4 L7 6 L10 3" stroke="#fff" fill="none"/><rect x="4" y="10" width="5" height="2" fill="#777"/></svg>HMI Preview</div>
      <div class="flex h-[20px] w-[106px] items-center justify-center gap-[5px] border-r border-[#aaa] bg-gradient-to-b from-[#f2f2f2] to-[#dcdcdc] text-[#555]"><svg class="h-[13px] w-[13px]" viewBox="0 0 13 13"><path d="M6.5 2 V10" stroke="#6fa32c" stroke-width="1.6"/><path d="M1 11 H12" stroke="#2a7cc8" stroke-width="2"/></svg>Port Monitor</div>
      <div class="flex h-[20px] w-[74px] items-center justify-center gap-[5px] border-r border-[#aaa] bg-gradient-to-b from-[#f2f2f2] to-[#dcdcdc] text-[#555]"><svg class="h-[14px] w-[12px]" viewBox="0 0 12 14"><rect x="1" y="2" width="10" height="11" fill="#3c5a1e"/><rect x="4" y="4" width="4" height="7" fill="#e8a800"/></svg>Results</div>
      <div class="flex h-[20px] w-[70px] items-center justify-center gap-[5px] border-r border-[#aaa] bg-gradient-to-b from-[#f2f2f2] to-[#dcdcdc] text-[#555]"><svg class="h-[16px] w-[13px]" viewBox="0 0 13 16"><rect x="2" y="1" width="10" height="14" fill="#f4f9e8" stroke="#a8cd63"/><rect x="1" y="9" width="6" height="6" fill="#2a7cc8"/></svg>Watch</div>
      <div class="-mt-[1px] flex h-[23px] w-[75px] items-center justify-center gap-[5px] border-x border-b border-[#999] bg-white"><svg class="h-[15px] w-[15px]" viewBox="0 0 15 15"><rect x="1" y="1" width="13" height="9" fill="#a8cd63"/><rect x="4" y="11" width="7" height="3" fill="#2a7cc8"/></svg>Output</div>
    </div>
  </div>

  <!-- properties -->
  <div class="ml-[7px] flex w-[209px] flex-col pt-[1px]">
    <div class="flex h-[19px] items-center border border-[#8f9eb2] bg-gradient-to-b from-[#eef3fb] to-[#b4c8e2] pl-[3px] pr-[3px]">
      <span>Properties</span>
      <svg class="ml-auto h-[6px] w-[8px]" viewBox="0 0 8 6"><path d="M0 0 H8 L4 6 Z" fill="#555"/></svg>
      <svg class="ml-[6px] h-[11px] w-[11px]"><use href="#i-pin"/></svg>
      <svg class="ml-[3px] h-[11px] w-[11px]"><use href="#i-cross"/></svg>
    </div>
    <div class="flex flex-1 border-x border-b border-[#8f9eb2] bg-[#f0f0f0]">
      <div class="w-[190px]">
        <div class="flex h-[20px] items-center justify-between bg-[#fbfbfb] pl-[5px] pr-[8px] pt-[3px]">Page Properties<span>-</span></div>
        <div class="flex h-[21px] items-start border-b-2 border-[#d4d4d4] bg-white"><span class="h-[19px] w-[96px] overflow-hidden whitespace-nowrap border-r-2 border-[#d4d4d4] pl-[5px] leading-[22px]">Title</span><span class="pl-[5px] leading-[22px]">No. 703 and 7...</span></div>
        <div class="flex h-[21px] items-start border-b-2 border-[#d4d4d4] bg-white"><span class="h-[19px] w-[96px] border-r-2 border-[#d4d4d4] pl-[5px] leading-[22px]">Width</span><span class="pl-[5px] leading-[22px] text-[#aaa]">1920</span></div>
        <div class="flex h-[21px] items-start border-b-2 border-[#d4d4d4] bg-white"><span class="h-[19px] w-[96px] border-r-2 border-[#d4d4d4] pl-[5px] leading-[22px]">Height</span><span class="pl-[5px] leading-[22px] text-[#aaa]">1080</span></div>
        <div class="flex h-[21px] items-start border-b-2 border-[#d4d4d4] bg-white"><span class="h-[19px] w-[96px] border-r-2 border-[#d4d4d4] pl-[5px] leading-[22px]">Background</span><span class="ml-[2px] mt-[2px] h-[15px] w-[90px] border border-black bg-[#1a3048]"></span></div>
        <div class="flex h-[21px] items-start border-b-2 border-[#d4d4d4] bg-white"><span class="h-[19px] w-[96px] border-r-2 border-[#d4d4d4] pl-[5px] leading-[22px]">Background I...</span></div>
        <div class="flex h-[21px] items-start border-b-2 border-[#d4d4d4] bg-white"><span class="h-[19px] w-[96px] border-r-2 border-[#d4d4d4] pl-[5px] leading-[22px]">Background I...</span><span class="pl-[5px] leading-[22px]">Stretch</span></div>
        <div class="flex h-[21px] items-start border-b-2 border-[#d4d4d4] bg-white"><span class="h-[19px] w-[96px] border-r-2 border-[#d4d4d4] pl-[5px] leading-[22px]">Grid size</span><span class="pl-[5px] leading-[22px]">4</span></div>
        <div class="flex h-[21px] items-start border-b-2 border-[#d4d4d4] bg-white"><span class="h-[19px] w-[96px] border-r-2 border-[#d4d4d4] pl-[5px] leading-[22px]">Visible</span><span class="pl-[5px] leading-[22px]">True</span></div>
        <div class="flex h-[21px] items-start border-b-2 border-[#d4d4d4] bg-white"><span class="h-[19px] w-[96px] border-r-2 border-[#d4d4d4] pl-[5px] leading-[22px]">User group</span><span class="pl-[5px] leading-[22px]">DefaultGroup...</span></div>
        <div class="flex h-[21px] items-start border-b-2 border-[#d4d4d4] bg-white"><span class="h-[19px] w-[96px] border-r-2 border-[#d4d4d4] pl-[5px] leading-[22px]">Gadget Styles</span><span class="pl-[5px] leading-[22px]">Default</span></div>
      </div>
      <div class="flex flex-1 flex-col items-center justify-between py-[8px]">
        <svg class="h-[5px] w-[8px]" viewBox="0 0 8 5"><path d="M4 0 L8 5 H0 Z" fill="#c9c9c9"/></svg>
        <svg class="h-[5px] w-[8px]" viewBox="0 0 8 5"><path d="M0 0 H8 L4 5 Z" fill="#c9c9c9"/></svg>
      </div>
    </div>
  </div>
</div>

<!-- status bar -->
<div class="flex h-[26px] items-center border-b border-[#777] bg-gradient-to-b from-[#eaf1fa] to-[#a4bad4] pl-[6px] pt-[2px]">Save succeeded</div>
</div>
</body>
</html>
